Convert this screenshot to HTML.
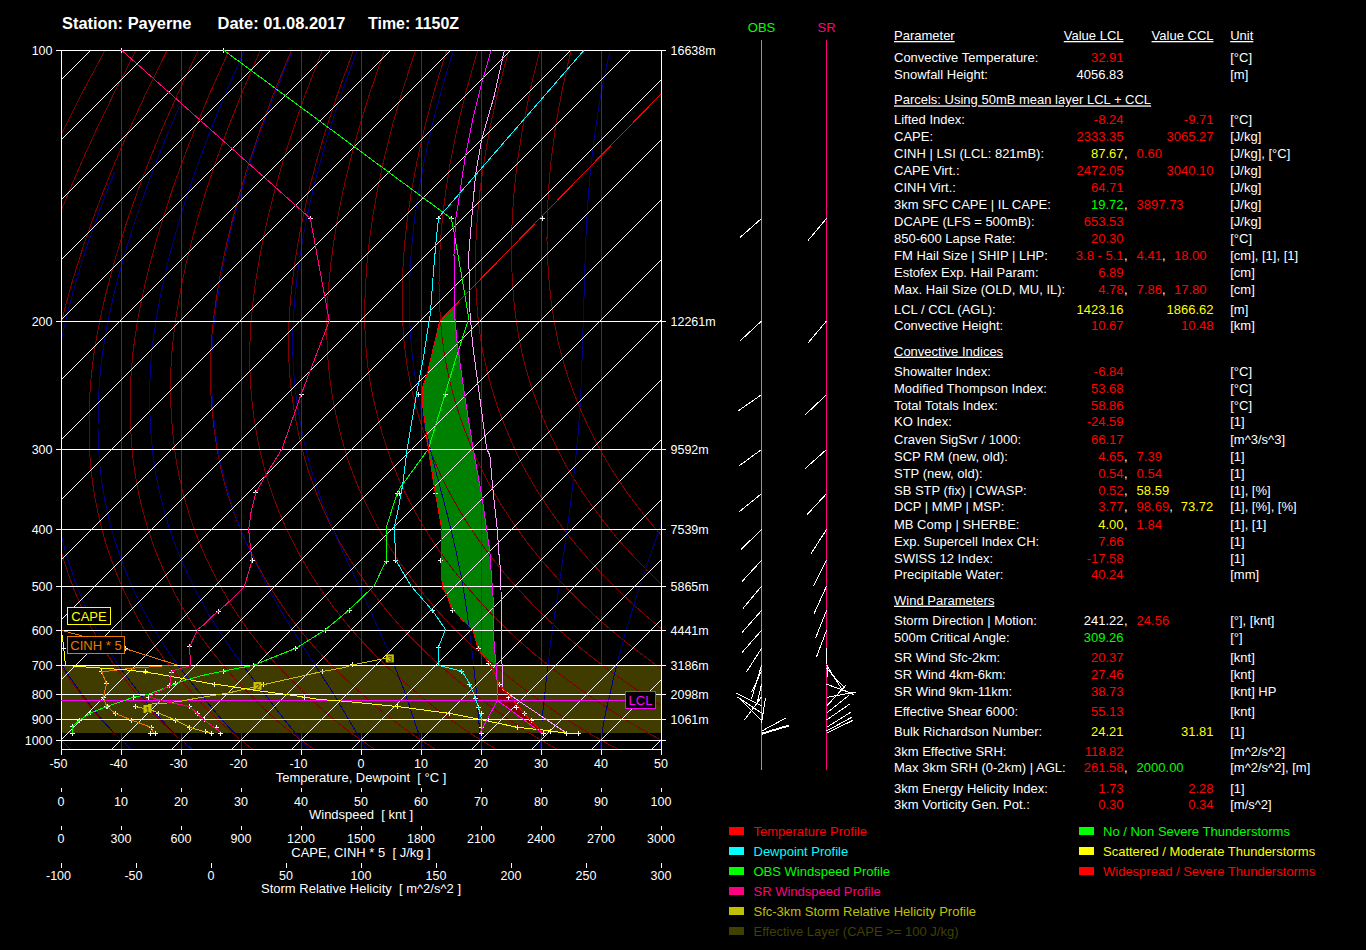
<!DOCTYPE html>
<html><head><meta charset="utf-8"><style>
html,body{margin:0;padding:0;background:#000;width:1366px;height:950px;overflow:hidden}
svg{position:absolute;left:0;top:0}
text{font-family:"Liberation Sans",sans-serif;white-space:pre}
</style></head><body>
<svg width="1366" height="950" viewBox="0 0 1366 950">
<rect x="61" y="665" width="600" height="68" fill="#403c00"/>
<path d="M454.5 306.5 L454.6 315.0 L456.8 339.2 L459.7 360.5 L465.4 400.3 L473.2 449.0 L482.2 498.0 L489.8 551.0 L491.0 570.0 L493.5 602.9 L494.1 647.1 L496.0 662.3 L496.4 670.0 L490.0 665.0 L488.4 662.3 L478.3 649.0 L472.6 629.4 L461.9 619.3 L451.8 608.6 L447.4 596.6 L442.3 587.1 L441.5 570.0 L441.2 525.8 L434.2 486.6 L428.4 449.0 L422.0 400.3 L422.0 388.9 L427.7 371.9 L439.8 321.0 L454.3 306.5Z" fill="#008000"/>
<path d="M496.5 678.0 L497.3 685.0 L497.4 700.4 L541.9 733.1 L543.0 733.1 L532.5 722.6 L522.0 710.9 L510.3 696.8 L502.0 687.5 L497.4 681.6Z" fill="#800000"/>
<path d="M104.9 50.5 L83.1 91.1 L64.6 127.6 L61.5 134.1 M61.5 740.5 L62.9 741.9 L64.8 743.8 L66.7 745.7 L68.6 747.5 L70.5 749.3 L70.8 749.5 M135.9 50.5 L115.1 91.1 L97.4 127.6 L82.4 160.2 L69.8 189.6 L61.5 210.0 M61.5 666.8 L62.3 668.1 L64.3 671.2 L66.4 674.2 L68.4 677.2 L70.4 680.1 L72.4 683.0 L74.5 685.8 L76.5 688.6 L78.5 691.3 L80.5 694.0 L82.5 696.7 L84.5 699.3 L86.5 701.9 L88.5 704.5 L90.5 707.0 L92.4 709.5 L94.4 711.9 L96.4 714.3 L98.5 716.7 L100.5 719.0 L102.5 721.3 L104.5 723.5 L106.6 725.7 L108.6 727.8 L110.7 729.9 L112.7 732.0 L114.8 734.1 L116.9 736.1 L118.9 738.1 L121.0 740.0 L123.1 741.9 L125.1 743.8 L127.2 745.7 L129.3 747.5 L131.4 749.3 L131.6 749.5 M167.0 50.5 L147.0 91.1 L130.1 127.6 L115.9 160.2 L104.0 189.6 L93.8 216.3 L85.2 240.7 L77.9 263.1 L71.6 283.9 L66.3 303.1 L61.8 321.0 L61.5 322.4 M61.5 552.6 L61.8 553.8 L63.6 559.6 L65.3 565.1 L67.1 570.6 L68.9 575.8 L70.8 581.0 L72.7 586.0 L74.5 590.9 L76.5 595.7 L78.4 600.3 L80.4 604.9 L82.4 609.3 L84.4 613.7 L86.5 617.9 L88.5 622.0 L90.6 626.1 L92.7 630.0 L94.8 633.8 L97.0 637.6 L99.1 641.3 L101.3 644.9 L103.5 648.4 L105.7 651.8 L107.9 655.2 L110.1 658.5 L112.3 661.8 L114.5 665.0 L116.7 668.1 L119.0 671.2 L121.2 674.2 L123.4 677.2 L125.7 680.1 L127.9 683.0 L130.1 685.8 L132.4 688.6 L134.6 691.3 L136.8 694.0 L139.0 696.7 L141.2 699.3 L143.4 701.9 L145.6 704.5 L147.7 707.0 L149.9 709.5 L152.1 711.9 L154.3 714.3 L156.5 716.7 L158.7 719.0 L160.9 721.3 L163.1 723.5 L165.4 725.7 L167.6 727.8 L169.8 729.9 L172.0 732.0 L174.3 734.1 L176.5 736.1 L178.8 738.1 L181.0 740.0 L183.2 741.9 L185.5 743.8 L187.7 745.7 L190.0 747.5 L192.2 749.3 L192.5 749.5 M198.1 50.5 L178.9 91.1 L162.8 127.6 L149.4 160.2 L138.2 189.6 L128.7 216.3 L120.7 240.7 L114.0 263.1 L108.4 283.9 L103.6 303.1 L99.7 321.0 L96.5 337.7 L94.0 353.1 L92.2 367.6 L90.8 381.2 L89.9 394.0 L89.3 406.1 L89.0 417.6 L89.0 428.5 L89.2 439.0 L89.5 449.0 L90.1 458.6 L90.9 467.7 L91.8 476.5 L92.9 484.8 L94.2 492.9 L95.5 500.6 L97.0 508.1 L98.5 515.3 L100.2 522.3 L101.8 529.0 L103.6 535.5 L105.4 541.8 L107.3 547.9 L109.3 553.8 L111.3 559.6 L113.4 565.1 L115.4 570.6 L117.6 575.8 L119.7 581.0 L121.9 586.0 L124.0 590.9 L126.2 595.7 L128.5 600.3 L130.7 604.9 L133.0 609.3 L135.2 613.7 L137.5 617.9 L139.9 622.0 L142.2 626.1 L144.5 630.0 L146.9 633.8 L149.3 637.6 L151.7 641.3 L154.1 644.9 L156.5 648.4 L159.0 651.8 L161.4 655.2 L163.8 658.5 L166.3 661.8 L168.7 665.0 L171.1 668.1 L173.6 671.2 L176.0 674.2 L178.5 677.2 L180.9 680.1 L183.4 683.0 L185.8 685.8 L188.3 688.6 L190.7 691.3 L193.1 694.0 L195.5 696.7 L197.9 699.3 L200.3 701.9 L202.6 704.5 L205.0 707.0 L207.4 709.5 L209.8 711.9 L212.1 714.3 L214.5 716.7 L216.9 719.0 L219.3 721.3 L221.7 723.5 L224.1 725.7 L226.5 727.8 L228.9 729.9 L231.4 732.0 L233.8 734.1 L236.2 736.1 L238.6 738.1 L241.0 740.0 L243.4 741.9 L245.8 743.8 L248.2 745.7 L250.6 747.5 L253.1 749.3 L253.3 749.5 M229.1 50.5 L210.8 91.1 L195.5 127.6 L182.9 160.2 L172.3 189.6 L163.6 216.3 L156.3 240.7 L150.2 263.1 L145.1 283.9 L140.9 303.1 L137.5 321.0 L134.9 337.7 L132.9 353.1 L131.6 367.6 L130.7 381.2 L130.2 394.0 L130.1 406.1 L130.3 417.6 L130.7 428.5 L131.3 439.0 L132.1 449.0 L133.0 458.6 L134.2 467.7 L135.5 476.5 L137.0 484.8 L138.6 492.9 L140.3 500.6 L142.1 508.1 L144.0 515.3 L146.0 522.3 L148.0 529.0 L150.1 535.5 L152.2 541.8 L154.5 547.9 L156.7 553.8 L159.1 559.6 L161.4 565.1 L163.8 570.6 L166.2 575.8 L168.6 581.0 L171.1 586.0 L173.5 590.9 L176.0 595.7 L178.5 600.3 L181.0 604.9 L183.5 609.3 L186.1 613.7 L188.6 617.9 L191.2 622.0 L193.8 626.1 L196.4 630.0 L199.0 633.8 L201.6 637.6 L204.3 641.3 L206.9 644.9 L209.6 648.4 L212.2 651.8 L214.9 655.2 L217.6 658.5 L220.2 661.8 L222.9 665.0 L225.5 668.1 L228.2 671.2 L230.9 674.2 L233.5 677.2 L236.2 680.1 L238.8 683.0 L241.5 685.8 L244.1 688.6 L246.8 691.3 L249.4 694.0 L252.0 696.7 L254.6 699.3 L257.2 701.9 L259.7 704.5 L262.3 707.0 L264.8 709.5 L267.4 711.9 L270.0 714.3 L272.6 716.7 L275.1 719.0 L277.7 721.3 L280.3 723.5 L282.9 725.7 L285.5 727.8 L288.1 729.9 L290.7 732.0 L293.2 734.1 L295.8 736.1 L298.4 738.1 L301.0 740.0 L303.6 741.9 L306.2 743.8 L308.7 745.7 L311.3 747.5 L313.9 749.3 L314.2 749.5 M260.2 50.5 L242.7 91.1 L228.2 127.6 L216.3 160.2 L206.5 189.6 L198.4 216.3 L191.8 240.7 L186.3 263.1 L181.8 283.9 L178.3 303.1 L175.4 321.0 L173.3 337.7 L171.8 353.1 L171.0 367.6 L170.6 381.2 L170.6 394.0 L170.9 406.1 L171.5 417.6 L172.4 428.5 L173.4 439.0 L174.6 449.0 L175.9 458.6 L177.5 467.7 L179.2 476.5 L181.1 484.8 L183.0 492.9 L185.1 500.6 L187.3 508.1 L189.5 515.3 L191.8 522.3 L194.2 529.0 L196.6 535.5 L199.1 541.8 L201.6 547.9 L204.2 553.8 L206.8 559.6 L209.5 565.1 L212.1 570.6 L214.8 575.8 L217.6 581.0 L220.3 586.0 L223.0 590.9 L225.8 595.7 L228.5 600.3 L231.3 604.9 L234.1 609.3 L236.9 613.7 L239.7 617.9 L242.5 622.0 L245.4 626.1 L248.2 630.0 L251.1 633.8 L254.0 637.6 L256.8 641.3 L259.7 644.9 L262.6 648.4 L265.5 651.8 L268.4 655.2 L271.3 658.5 L274.2 661.8 L277.1 665.0 L279.9 668.1 L282.8 671.2 L285.7 674.2 L288.6 677.2 L291.5 680.1 L294.3 683.0 L297.2 685.8 L300.0 688.6 L302.9 691.3 L305.7 694.0 L308.5 696.7 L311.3 699.3 L314.0 701.9 L316.8 704.5 L319.6 707.0 L322.3 709.5 L325.1 711.9 L327.8 714.3 L330.6 716.7 L333.4 719.0 L336.1 721.3 L338.9 723.5 L341.7 725.7 L344.4 727.8 L347.2 729.9 L350.0 732.0 L352.7 734.1 L355.5 736.1 L358.2 738.1 L361.0 740.0 L363.8 741.9 L366.5 743.8 L369.3 745.7 L372.0 747.5 L374.7 749.3 L375.1 749.5 M291.3 50.5 L274.6 91.1 L261.0 127.6 L249.8 160.2 L240.7 189.6 L233.3 216.3 L227.3 240.7 L222.5 263.1 L218.6 283.9 L215.6 303.1 L213.3 321.0 L211.7 337.7 L210.7 353.1 L210.4 367.6 L210.5 381.2 L210.9 394.0 L211.7 406.1 L212.8 417.6 L214.1 428.5 L215.5 439.0 L217.1 449.0 L218.9 458.6 L220.8 467.7 L222.9 476.5 L225.1 484.8 L227.5 492.9 L229.9 500.6 L232.4 508.1 L235.0 515.3 L237.7 522.3 L240.3 529.0 L243.1 535.5 L245.9 541.8 L248.7 547.9 L251.6 553.8 L254.6 559.6 L257.5 565.1 L260.5 570.6 L263.5 575.8 L266.5 581.0 L269.5 586.0 L272.5 590.9 L275.5 595.7 L278.6 600.3 L281.6 604.9 L284.7 609.3 L287.7 613.7 L290.8 617.9 L293.9 622.0 L297.0 626.1 L300.1 630.0 L303.2 633.8 L306.3 637.6 L309.4 641.3 L312.5 644.9 L315.7 648.4 L318.8 651.8 L321.9 655.2 L325.0 658.5 L328.1 661.8 L331.2 665.0 L334.3 668.1 L337.4 671.2 L340.5 674.2 L343.6 677.2 L346.7 680.1 L349.8 683.0 L352.9 685.8 L355.9 688.6 L358.9 691.3 L362.0 694.0 L365.0 696.7 L368.0 699.3 L370.9 701.9 L373.9 704.5 L376.8 707.0 L379.8 709.5 L382.7 711.9 L385.7 714.3 L388.6 716.7 L391.6 719.0 L394.5 721.3 L397.5 723.5 L400.4 725.7 L403.4 727.8 L406.3 729.9 L409.3 732.0 L412.2 734.1 L415.1 736.1 L418.1 738.1 L421.0 740.0 L423.9 741.9 L426.8 743.8 L429.8 745.7 L432.7 747.5 L435.6 749.3 L435.9 749.5 M322.3 50.5 L306.5 91.1 L293.7 127.6 L283.3 160.2 L274.9 189.6 L268.2 216.3 L262.8 240.7 L258.6 263.1 L255.3 283.9 L252.9 303.1 L251.1 321.0 L250.1 337.7 L249.7 353.1 L249.8 367.6 L250.4 381.2 L251.3 394.0 L252.5 406.1 L254.0 417.6 L255.7 428.5 L257.6 439.0 L259.6 449.0 L261.8 458.6 L264.1 467.7 L266.6 476.5 L269.2 484.8 L271.9 492.9 L274.7 500.6 L277.6 508.1 L280.5 515.3 L283.5 522.3 L286.5 529.0 L289.6 535.5 L292.7 541.8 L295.9 547.9 L299.1 553.8 L302.3 559.6 L305.6 565.1 L308.8 570.6 L312.1 575.8 L315.4 581.0 L318.7 586.0 L322.0 590.9 L325.3 595.7 L328.6 600.3 L331.9 604.9 L335.2 609.3 L338.6 613.7 L341.9 617.9 L345.2 622.0 L348.6 626.1 L351.9 630.0 L355.3 633.8 L358.6 637.6 L362.0 641.3 L365.4 644.9 L368.7 648.4 L372.1 651.8 L375.4 655.2 L378.8 658.5 L382.1 661.8 L385.4 665.0 L388.7 668.1 L392.1 671.2 L395.4 674.2 L398.7 677.2 L402.0 680.1 L405.3 683.0 L408.5 685.8 L411.8 688.6 L415.0 691.3 L418.3 694.0 L421.5 696.7 L424.6 699.3 L427.8 701.9 L431.0 704.5 L434.1 707.0 L437.2 709.5 L440.4 711.9 L443.5 714.3 L446.7 716.7 L449.8 719.0 L452.9 721.3 L456.1 723.5 L459.2 725.7 L462.3 727.8 L465.4 729.9 L468.6 732.0 L471.7 734.1 L474.8 736.1 L477.9 738.1 L481.0 740.0 L484.1 741.9 L487.2 743.8 L490.3 745.7 L493.4 747.5 L496.4 749.3 L496.8 749.5 M353.4 50.5 L338.5 91.1 L326.4 127.6 L316.8 160.2 L309.1 189.6 L303.1 216.3 L298.4 240.7 L294.7 263.1 L292.1 283.9 L290.2 303.1 L289.0 321.0 L288.5 337.7 L288.6 353.1 L289.2 367.6 L290.3 381.2 L291.7 394.0 L293.4 406.1 L295.3 417.6 L297.4 428.5 L299.7 439.0 L302.1 449.0 L304.7 458.6 L307.4 467.7 L310.3 476.5 L313.3 484.8 L316.4 492.9 L319.5 500.6 L322.7 508.1 L326.0 515.3 L329.3 522.3 L332.7 529.0 L336.1 535.5 L339.5 541.8 L343.0 547.9 L346.5 553.8 L350.1 559.6 L353.6 565.1 L357.2 570.6 L360.8 575.8 L364.3 581.0 L367.9 586.0 L371.5 590.9 L375.1 595.7 L378.6 600.3 L382.2 604.9 L385.8 609.3 L389.4 613.7 L393.0 617.9 L396.6 622.0 L400.2 626.1 L403.8 630.0 L407.4 633.8 L411.0 637.6 L414.6 641.3 L418.2 644.9 L421.8 648.4 L425.3 651.8 L428.9 655.2 L432.5 658.5 L436.1 661.8 L439.6 665.0 L443.1 668.1 L446.7 671.2 L450.2 674.2 L453.7 677.2 L457.2 680.1 L460.7 683.0 L464.2 685.8 L467.7 688.6 L471.1 691.3 L474.5 694.0 L478.0 696.7 L481.3 699.3 L484.7 701.9 L488.0 704.5 L491.4 707.0 L494.7 709.5 L498.0 711.9 L501.4 714.3 L504.7 716.7 L508.0 719.0 L511.3 721.3 L514.7 723.5 L518.0 725.7 L521.3 727.8 L524.6 729.9 L527.9 732.0 L531.2 734.1 L534.4 736.1 L537.7 738.1 L541.0 740.0 L544.3 741.9 L547.5 743.8 L550.8 745.7 L554.0 747.5 L557.3 749.3 L557.7 749.5 M384.5 50.5 L370.4 91.1 L359.1 127.6 L350.3 160.2 L343.3 189.6 L337.9 216.3 L333.9 240.7 L330.9 263.1 L328.8 283.9 L327.5 303.1 L326.9 321.0 L326.9 337.7 L327.5 353.1 L328.6 367.6 L330.1 381.2 L332.0 394.0 L334.2 406.1 L336.6 417.6 L339.1 428.5 L341.8 439.0 L344.7 449.0 L347.6 458.6 L350.7 467.7 L354.0 476.5 L357.3 484.8 L360.8 492.9 L364.3 500.6 L367.9 508.1 L371.5 515.3 L375.2 522.3 L378.8 529.0 L382.6 535.5 L386.3 541.8 L390.1 547.9 L394.0 553.8 L397.8 559.6 L401.7 565.1 L405.5 570.6 L409.4 575.8 L413.3 581.0 L417.1 586.0 L421.0 590.9 L424.8 595.7 L428.7 600.3 L432.5 604.9 L436.4 609.3 L440.2 613.7 L444.1 617.9 L447.9 622.0 L451.8 626.1 L455.6 630.0 L459.5 633.8 L463.3 637.6 L467.1 641.3 L471.0 644.9 L474.8 648.4 L478.6 651.8 L482.4 655.2 L486.2 658.5 L490.0 661.8 L493.8 665.0 L497.5 668.1 L501.3 671.2 L505.0 674.2 L508.8 677.2 L512.5 680.1 L516.2 683.0 L519.9 685.8 L523.6 688.6 L527.2 691.3 L530.8 694.0 L534.4 696.7 L538.0 699.3 L541.6 701.9 L545.1 704.5 L548.7 707.0 L552.2 709.5 L555.7 711.9 L559.2 714.3 L562.7 716.7 L566.2 719.0 L569.7 721.3 L573.2 723.5 L576.7 725.7 L580.2 727.8 L583.7 729.9 L587.2 732.0 L590.6 734.1 L594.1 736.1 L597.6 738.1 L601.0 740.0 L604.4 741.9 L607.9 743.8 L611.3 745.7 L614.7 747.5 L618.1 749.3 L618.5 749.5 M415.5 50.5 L402.3 91.1 L391.8 127.6 L383.7 160.2 L377.5 189.6 L372.8 216.3 L369.4 240.7 L367.0 263.1 L365.6 283.9 L364.8 303.1 L364.7 321.0 L365.3 337.7 L366.4 353.1 L368.0 367.6 L370.0 381.2 L372.4 394.0 L375.0 406.1 L377.8 417.6 L380.8 428.5 L383.9 439.0 L387.2 449.0 L390.5 458.6 L394.1 467.7 L397.7 476.5 L401.4 484.8 L405.2 492.9 L409.1 500.6 L413.0 508.1 L417.0 515.3 L421.0 522.3 L425.0 529.0 L429.1 535.5 L433.1 541.8 L437.3 547.9 L441.4 553.8 L445.6 559.6 L449.7 565.1 L453.9 570.6 L458.0 575.8 L462.2 581.0 L466.3 586.0 L470.5 590.9 L474.6 595.7 L478.7 600.3 L482.8 604.9 L487.0 609.3 L491.1 613.7 L495.2 617.9 L499.3 622.0 L503.4 626.1 L507.5 630.0 L511.5 633.8 L515.6 637.6 L519.7 641.3 L523.8 644.9 L527.8 648.4 L531.9 651.8 L535.9 655.2 L540.0 658.5 L544.0 661.8 L548.0 665.0 L551.9 668.1 L555.9 671.2 L559.9 674.2 L563.8 677.2 L567.8 680.1 L571.7 683.0 L575.6 685.8 L579.4 688.6 L583.3 691.3 L587.1 694.0 L590.9 696.7 L594.7 699.3 L598.5 701.9 L602.2 704.5 L605.9 707.0 L609.7 709.5 L613.4 711.9 L617.1 714.3 L620.8 716.7 L624.4 719.0 L628.1 721.3 L631.8 723.5 L635.5 725.7 L639.2 727.8 L642.8 729.9 L646.5 732.0 L650.1 734.1 L653.8 736.1 L657.4 738.1 L661.0 740.0 L661.5 740.3 M446.6 50.5 L434.2 91.1 L424.6 127.6 L417.2 160.2 L411.7 189.6 L407.7 216.3 L404.9 240.7 L403.2 263.1 L402.3 283.9 L402.1 303.1 L402.6 321.0 L403.7 337.7 L405.3 353.1 L407.4 367.6 L409.9 381.2 L412.7 394.0 L415.8 406.1 L419.1 417.6 L422.5 428.5 L426.1 439.0 L429.7 449.0 L433.5 458.6 L437.4 467.7 L441.4 476.5 L445.5 484.8 L449.7 492.9 L453.9 500.6 L458.2 508.1 L462.5 515.3 L466.8 522.3 L471.2 529.0 L475.6 535.5 L480.0 541.8 L484.4 547.9 L488.8 553.8 L493.3 559.6 L497.8 565.1 L502.2 570.6 L506.7 575.8 L511.1 581.0 L515.5 586.0 L520.0 590.9 L524.4 595.7 L528.8 600.3 L533.1 604.9 L537.5 609.3 L541.9 613.7 L546.3 617.9 L550.6 622.0 L555.0 626.1 L559.3 630.0 L563.6 633.8 L568.0 637.6 L572.3 641.3 L576.6 644.9 L580.9 648.4 L585.2 651.8 L589.4 655.2 L593.7 658.5 L597.9 661.8 L602.1 665.0 L606.3 668.1 L610.5 671.2 L614.7 674.2 L618.9 677.2 L623.0 680.1 L627.1 683.0 L631.2 685.8 L635.3 688.6 L639.4 691.3 L643.4 694.0 L647.4 696.7 L651.4 699.3 L655.4 701.9 L659.3 704.5 L661.5 705.9 M477.7 50.5 L466.1 91.1 L457.3 127.6 L450.7 160.2 L445.9 189.6 L442.6 216.3 L440.5 240.7 L439.3 263.1 L439.0 283.9 L439.5 303.1 L440.5 321.0 L442.1 337.7 L444.2 353.1 L446.8 367.6 L449.8 381.2 L453.1 394.0 L456.6 406.1 L460.3 417.6 L464.2 428.5 L468.2 439.0 L472.2 449.0 L476.4 458.6 L480.7 467.7 L485.1 476.5 L489.6 484.8 L494.1 492.9 L498.7 500.6 L503.3 508.1 L508.0 515.3 L512.7 522.3 L517.4 529.0 L522.1 535.5 L526.8 541.8 L531.5 547.9 L536.3 553.8 L541.0 559.6 L545.8 565.1 L550.6 570.6 L555.3 575.8 L560.0 581.0 L564.8 586.0 L569.4 590.9 L574.1 595.7 L578.8 600.3 L583.4 604.9 L588.1 609.3 L592.7 613.7 L597.3 617.9 L602.0 622.0 L606.6 626.1 L611.1 630.0 L615.7 633.8 L620.3 637.6 L624.9 641.3 L629.4 644.9 L633.9 648.4 L638.5 651.8 L643.0 655.2 L647.4 658.5 L651.9 661.8 L656.3 665.0 L660.8 668.1 L661.5 668.7 M508.7 50.5 L498.0 91.1 L490.0 127.6 L484.2 160.2 L480.1 189.6 L477.4 216.3 L476.0 240.7 L475.5 263.1 L475.8 283.9 L476.8 303.1 L478.3 321.0 L480.5 337.7 L483.1 353.1 L486.3 367.6 L489.7 381.2 L493.5 394.0 L497.4 406.1 L501.6 417.6 L505.9 428.5 L510.3 439.0 L514.7 449.0 L519.3 458.6 L524.0 467.7 L528.8 476.5 L533.6 484.8 L538.5 492.9 L543.5 500.6 L548.5 508.1 L553.5 515.3 L558.5 522.3 L563.5 529.0 L568.5 535.5 L573.6 541.8 L578.7 547.9 L583.7 553.8 L588.8 559.6 L593.9 565.1 L598.9 570.6 L604.0 575.8 L609.0 581.0 L614.0 586.0 L618.9 590.9 L623.9 595.7 L628.8 600.3 L633.8 604.9 L638.7 609.3 L643.6 613.7 L648.4 617.9 L653.3 622.0 L658.2 626.1 L661.5 628.8 M539.8 50.5 L529.9 91.1 L522.7 127.6 L517.6 160.2 L514.3 189.6 L512.3 216.3 L511.5 240.7 L511.6 263.1 L512.5 283.9 L514.1 303.1 L516.2 321.0 L518.9 337.7 L522.0 353.1 L525.7 367.6 L529.6 381.2 L533.8 394.0 L538.3 406.1 L542.9 417.6 L547.6 428.5 L552.4 439.0 L557.3 449.0 L562.2 458.6 L567.3 467.7 L572.5 476.5 L577.7 484.8 L583.0 492.9 L588.3 500.6 L593.6 508.1 L599.0 515.3 L604.3 522.3 L609.7 529.0 L615.0 535.5 L620.4 541.8 L625.8 547.9 L631.2 553.8 L636.5 559.6 L641.9 565.1 L647.3 570.6 L652.6 575.8 L657.9 581.0 L661.5 584.4 M570.9 50.5 L561.9 91.1 L555.4 127.6 L551.1 160.2 L548.5 189.6 L547.2 216.3 L547.0 240.7 L547.8 263.1 L549.3 283.9 L551.4 303.1 L554.1 321.0 L557.3 337.7 L561.0 353.1 L565.1 367.6 L569.5 381.2 L574.2 394.0 L579.1 406.1 L584.1 417.6 L589.3 428.5 L594.5 439.0 L599.8 449.0 L605.2 458.6 L610.6 467.7 L616.2 476.5 L621.8 484.8 L627.4 492.9 L633.1 500.6 L638.8 508.1 L644.5 515.3 L650.2 522.3 L655.9 529.0 L661.5 535.5" stroke="#800000" fill="none" stroke-width="1" shape-rendering="crispEdges"/>
<path d="M131.1 749.5 L121.0 740.0 L120.0 739.0 L119.0 738.1 L118.1 737.1 L117.1 736.1 L116.1 735.1 L115.1 734.1 L114.1 733.0 L113.1 732.0 L112.1 731.0 L111.2 729.9 L110.2 728.9 L109.2 727.8 L108.2 726.8 L107.2 725.7 L106.2 724.6 L105.3 723.5 L104.3 722.4 L103.3 721.3 L102.3 720.1 L101.3 719.0 L100.3 717.9 L99.4 716.7 L98.4 715.5 L97.4 714.3 L96.4 713.1 L95.5 711.9 L94.5 710.7 L93.5 709.5 L92.6 708.3 L91.6 707.0 L90.6 705.7 L89.7 704.5 L88.7 703.2 L87.7 701.9 L86.8 700.6 L85.8 699.3 L84.8 698.0 L83.8 696.7 L82.9 695.3 L81.9 694.0 L80.9 692.7 L79.9 691.3 L78.9 689.9 L77.9 688.6 L76.9 687.2 L75.9 685.8 L74.9 684.4 L73.9 683.0 L72.9 681.5 L71.9 680.1 L70.9 678.7 L69.9 677.2 L68.9 675.7 L67.9 674.2 L66.9 672.7 L65.9 671.2 L65.0 669.7 L64.0 668.1 L63.0 666.6 L62.0 665.0 L61.5 664.2 M191.1 749.5 L181.0 740.0 L180.0 739.0 L179.0 738.1 L178.0 737.1 L177.0 736.1 L176.0 735.1 L175.0 734.1 L174.0 733.0 L173.0 732.0 L171.9 731.0 L170.9 729.9 L169.9 728.9 L168.9 727.8 L167.9 726.8 L166.9 725.7 L165.8 724.6 L164.8 723.5 L163.8 722.4 L162.8 721.3 L161.7 720.1 L160.7 719.0 L159.7 717.9 L158.7 716.7 L157.6 715.5 L156.6 714.3 L155.6 713.1 L154.6 711.9 L153.5 710.7 L152.5 709.5 L151.5 708.3 L150.5 707.0 L149.4 705.7 L148.4 704.5 L147.4 703.2 L146.4 701.9 L145.3 700.6 L144.3 699.3 L143.2 698.0 L142.2 696.7 L141.1 695.3 L140.1 694.0 L139.0 692.7 L138.0 691.3 L136.9 689.9 L135.8 688.6 L134.8 687.2 L133.7 685.8 L132.6 684.4 L131.5 683.0 L130.4 681.5 L129.4 680.1 L128.3 678.7 L127.2 677.2 L126.1 675.7 L125.0 674.2 L123.9 672.7 L122.8 671.2 L121.7 669.7 L120.7 668.1 L119.6 666.6 L118.5 665.0 L117.4 663.4 L116.3 661.8 L115.2 660.2 L114.2 658.5 L113.1 656.9 L112.0 655.2 L110.9 653.5 L109.8 651.8 L108.7 650.1 L107.6 648.4 L106.6 646.7 L105.5 644.9 L104.4 643.1 L103.3 641.3 L102.3 639.5 L101.2 637.6 L100.1 635.7 L99.1 633.8 L98.0 631.9 L97.0 630.0 L95.9 628.0 L94.9 626.1 L93.8 624.1 L92.8 622.0 L91.8 620.0 L90.7 617.9 L89.7 615.8 L88.7 613.7 L87.7 611.5 L86.7 609.3 L85.7 607.1 L84.7 604.9 L83.7 602.6 L82.7 600.3 L81.8 598.0 L80.8 595.7 L79.8 593.3 L78.9 590.9 L77.9 588.5 L77.0 586.0 L76.0 583.5 L75.1 581.0 L74.2 578.4 L73.2 575.8 L72.3 573.2 L71.4 570.6 L70.5 567.9 L69.6 565.1 L68.7 562.4 L67.8 559.6 L67.0 556.7 L66.1 553.8 L65.3 550.9 L64.5 547.9 L63.7 544.9 L62.9 541.8 L62.1 538.7 L61.5 536.2 M61.5 340.0 L62.0 337.7 L63.7 329.5 L65.7 321.0 L67.8 312.2 L70.1 303.1 L72.7 293.6 L75.4 283.9 L78.4 273.7 L81.6 263.1 L85.1 252.1 L88.9 240.7 L93.1 228.7 L97.5 216.3 L102.4 203.2 L107.6 189.6 L113.3 175.2 L114.5 172.3 M250.5 749.5 L241.0 740.0 L240.1 739.0 L239.1 738.1 L238.1 737.1 L237.2 736.1 L236.2 735.1 L235.3 734.1 L234.3 733.0 L233.3 732.0 L232.3 731.0 L231.4 729.9 L230.4 728.9 L229.4 727.8 L228.4 726.8 L227.4 725.7 L226.4 724.6 L225.4 723.5 L224.4 722.4 L223.4 721.3 L222.4 720.1 L221.4 719.0 L220.4 717.9 L219.3 716.7 L218.3 715.5 L217.3 714.3 L216.3 713.1 L215.3 711.9 L214.2 710.7 L213.2 709.5 L212.2 708.3 L211.2 707.0 L210.1 705.7 L209.1 704.5 L208.0 703.2 L207.0 701.9 L205.9 700.6 L204.9 699.3 L203.8 698.0 L202.7 696.7 L201.7 695.3 L200.6 694.0 L199.5 692.7 L198.4 691.3 L197.3 689.9 L196.2 688.6 L195.1 687.2 L193.9 685.8 L192.8 684.4 L191.7 683.0 L190.6 681.5 L189.4 680.1 L188.3 678.7 L187.1 677.2 L186.0 675.7 L184.8 674.2 L183.7 672.7 L182.5 671.2 L181.4 669.7 L180.2 668.1 L179.1 666.6 L177.9 665.0 L176.8 663.4 L175.6 661.8 L174.4 660.2 L173.3 658.5 L172.1 656.9 L170.9 655.2 L169.7 653.5 L168.6 651.8 L167.4 650.1 L166.2 648.4 L165.0 646.7 L163.9 644.9 L162.7 643.1 L161.5 641.3 L160.3 639.5 L159.2 637.6 L158.0 635.7 L156.8 633.8 L155.7 631.9 L154.5 630.0 L153.3 628.0 L152.2 626.1 L151.0 624.1 L149.9 622.0 L148.7 620.0 L147.6 617.9 L146.4 615.8 L145.3 613.7 L144.2 611.5 L143.0 609.3 L141.9 607.1 L140.8 604.9 L139.6 602.6 L138.5 600.3 L137.4 598.0 L136.3 595.7 L135.2 593.3 L134.1 590.9 L133.0 588.5 L131.9 586.0 L130.8 583.5 L129.7 581.0 L128.6 578.4 L127.6 575.8 L126.5 573.2 L125.4 570.6 L124.4 567.9 L123.3 565.1 L122.3 562.4 L121.2 559.6 L120.2 556.7 L119.2 553.8 L118.2 550.9 L117.2 547.9 L116.2 544.9 L115.2 541.8 L114.3 538.7 L113.4 535.5 L112.4 532.3 L111.6 529.0 L110.7 525.7 L109.8 522.3 L109.0 518.8 L108.2 515.3 L107.4 511.7 L106.6 508.1 L105.8 504.4 L105.0 500.6 L104.3 496.8 L103.6 492.9 L103.0 488.9 L102.3 484.8 L101.7 480.7 L101.2 476.5 L100.6 472.1 L100.1 467.7 L99.7 463.2 L99.3 458.6 L99.0 453.9 L98.7 449.0 L98.5 444.0 L98.3 439.0 L98.1 433.8 L98.0 428.5 L98.0 423.1 L98.0 417.6 L98.0 411.9 L98.2 406.1 L98.4 400.1 L98.7 394.0 L99.1 387.7 L99.5 381.2 L100.1 374.5 L100.8 367.6 L101.6 360.5 L102.6 353.1 L103.7 345.5 L105.0 337.7 L106.4 329.5 L108.1 321.0 L109.9 312.2 L111.9 303.1 L114.1 293.6 L116.6 283.9 L119.2 273.7 L122.1 263.1 L125.3 252.1 L128.7 240.7 L132.5 228.7 L136.6 216.3 L141.0 203.2 L145.9 189.6 L151.2 175.2 L157.0 160.2 L163.4 144.3 L170.3 127.6 L177.9 109.9 L179.5 106.2 M309.0 749.5 L301.0 740.0 L300.2 739.0 L299.4 738.1 L298.6 737.1 L297.7 736.1 L296.9 735.1 L296.1 734.1 L295.2 733.0 L294.4 732.0 L293.6 731.0 L292.7 729.9 L291.8 728.9 L291.0 727.8 L290.1 726.8 L289.2 725.7 L288.4 724.6 L287.5 723.5 L286.6 722.4 L285.7 721.3 L284.8 720.1 L283.9 719.0 L283.0 717.9 L282.1 716.7 L281.2 715.5 L280.3 714.3 L279.3 713.1 L278.4 711.9 L277.5 710.7 L276.5 709.5 L275.6 708.3 L274.7 707.0 L273.7 705.7 L272.8 704.5 L271.8 703.2 L270.8 701.9 L269.8 700.6 L268.8 699.3 L267.8 698.0 L266.8 696.7 L265.8 695.3 L264.8 694.0 L263.8 692.7 L262.7 691.3 L261.7 689.9 L260.6 688.6 L259.5 687.2 L258.5 685.8 L257.4 684.4 L256.3 683.0 L255.2 681.5 L254.1 680.1 L252.9 678.7 L251.8 677.2 L250.7 675.7 L249.6 674.2 L248.4 672.7 L247.3 671.2 L246.1 669.7 L245.0 668.1 L243.8 666.6 L242.6 665.0 L241.5 663.4 L240.3 661.8 L239.1 660.2 L237.9 658.5 L236.7 656.9 L235.5 655.2 L234.3 653.5 L233.1 651.8 L231.9 650.1 L230.7 648.4 L229.5 646.7 L228.2 644.9 L227.0 643.1 L225.8 641.3 L224.5 639.5 L223.3 637.6 L222.1 635.7 L220.8 633.8 L219.6 631.9 L218.3 630.0 L217.1 628.0 L215.8 626.1 L214.6 624.1 L213.4 622.0 L212.1 620.0 L210.9 617.9 L209.6 615.8 L208.4 613.7 L207.1 611.5 L205.9 609.3 L204.6 607.1 L203.4 604.9 L202.2 602.6 L200.9 600.3 L199.7 598.0 L198.4 595.7 L197.2 593.3 L196.0 590.9 L194.7 588.5 L193.5 586.0 L192.2 583.5 L191.0 581.0 L189.8 578.4 L188.5 575.8 L187.3 573.2 L186.1 570.6 L184.9 567.9 L183.7 565.1 L182.4 562.4 L181.2 559.6 L180.0 556.7 L178.8 553.8 L177.7 550.9 L176.5 547.9 L175.3 544.9 L174.2 541.8 L173.0 538.7 L171.9 535.5 L170.8 532.3 L169.7 529.0 L168.7 525.7 L167.6 522.3 L166.6 518.8 L165.5 515.3 L164.5 511.7 L163.5 508.1 L162.5 504.4 L161.6 500.6 L160.6 496.8 L159.7 492.9 L158.8 488.9 L157.9 484.8 L157.1 480.7 L156.3 476.5 L155.5 472.1 L154.8 467.7 L154.1 463.2 L153.5 458.6 L152.9 453.9 L152.4 449.0 L151.9 444.0 L151.4 439.0 L151.0 433.8 L150.7 428.5 L150.3 423.1 L150.1 417.6 L149.9 411.9 L149.7 406.1 L149.6 400.1 L149.6 394.0 L149.7 387.7 L149.9 381.2 L150.2 374.5 L150.6 367.6 L151.1 360.5 L151.7 353.1 L152.5 345.5 L153.5 337.7 L154.6 329.5 L155.9 321.0 L157.4 312.2 L159.1 303.1 L160.9 293.6 L163.0 283.9 L165.3 273.7 L167.8 263.1 L170.6 252.1 L173.6 240.7 L177.0 228.7 L180.6 216.3 L184.7 203.2 L189.1 189.6 L194.0 175.2 L199.3 160.2 L205.2 144.3 L211.7 127.6 L218.8 109.9 L226.6 91.1 L235.2 71.2 L244.5 50.5 M366.8 749.5 L361.0 740.0 L360.4 739.0 L359.8 738.1 L359.2 737.1 L358.6 736.1 L358.0 735.1 L357.4 734.1 L356.8 733.0 L356.2 732.0 L355.5 731.0 L354.9 729.9 L354.3 728.9 L353.6 727.8 L353.0 726.8 L352.3 725.7 L351.7 724.6 L351.0 723.5 L350.4 722.4 L349.7 721.3 L349.0 720.1 L348.3 719.0 L347.7 717.9 L347.0 716.7 L346.3 715.5 L345.6 714.3 L344.9 713.1 L344.2 711.9 L343.5 710.7 L342.8 709.5 L342.1 708.3 L341.3 707.0 L340.6 705.7 L339.9 704.5 L339.1 703.2 L338.4 701.9 L337.6 700.6 L336.8 699.3 L336.0 698.0 L335.2 696.7 L334.4 695.3 L333.6 694.0 L332.8 692.7 L331.9 691.3 L331.1 689.9 L330.2 688.6 L329.3 687.2 L328.5 685.8 L327.6 684.4 L326.7 683.0 L325.7 681.5 L324.8 680.1 L323.9 678.7 L322.9 677.2 L322.0 675.7 L321.0 674.2 L320.0 672.7 L319.1 671.2 L318.1 669.7 L317.1 668.1 L316.1 666.6 L315.0 665.0 L314.0 663.4 L313.0 661.8 L311.9 660.2 L310.9 658.5 L309.8 656.9 L308.7 655.2 L307.6 653.5 L306.5 651.8 L305.4 650.1 L304.3 648.4 L303.2 646.7 L302.0 644.9 L300.9 643.1 L299.7 641.3 L298.6 639.5 L297.4 637.6 L296.2 635.7 L295.0 633.8 L293.8 631.9 L292.6 630.0 L291.4 628.0 L290.2 626.1 L289.0 624.1 L287.7 622.0 L286.5 620.0 L285.3 617.9 L284.0 615.8 L282.8 613.7 L281.5 611.5 L280.2 609.3 L279.0 607.1 L277.7 604.9 L276.4 602.6 L275.1 600.3 L273.8 598.0 L272.5 595.7 L271.2 593.3 L269.9 590.9 L268.6 588.5 L267.2 586.0 L265.9 583.5 L264.6 581.0 L263.2 578.4 L261.9 575.8 L260.5 573.2 L259.2 570.6 L257.8 567.9 L256.5 565.1 L255.1 562.4 L253.8 559.6 L252.4 556.7 L251.1 553.8 L249.7 550.9 L248.4 547.9 L247.0 544.9 L245.7 541.8 L244.4 538.7 L243.1 535.5 L241.8 532.3 L240.5 529.0 L239.2 525.7 L237.9 522.3 L236.6 518.8 L235.4 515.3 L234.1 511.7 L232.9 508.1 L231.7 504.4 L230.5 500.6 L229.3 496.8 L228.1 492.9 L227.0 488.9 L225.8 484.8 L224.7 480.7 L223.7 476.5 L222.6 472.1 L221.6 467.7 L220.7 463.2 L219.7 458.6 L218.8 453.9 L218.0 449.0 L217.2 444.0 L216.4 439.0 L215.7 433.8 L215.0 428.5 L214.4 423.1 L213.8 417.6 L213.3 411.9 L212.8 406.1 L212.4 400.1 L212.0 394.0 L211.7 387.7 L211.6 381.2 L211.5 374.5 L211.5 367.6 L211.6 360.5 L211.9 353.1 L212.3 345.5 L212.8 337.7 L213.5 329.5 L214.4 321.0 L215.5 312.2 L216.7 303.1 L218.2 293.6 L219.8 283.9 L221.6 273.7 L223.7 263.1 L226.0 252.1 L228.5 240.7 L231.4 228.7 L234.6 216.3 L238.1 203.2 L242.0 189.6 L246.3 175.2 L251.1 160.2 L256.4 144.3 L262.2 127.6 L268.7 109.9 L275.9 91.1 L283.9 71.2 L292.6 50.5 M424.5 749.5 L421.0 740.0 L420.7 739.0 L420.3 738.1 L420.0 737.1 L419.6 736.1 L419.3 735.1 L418.9 734.1 L418.5 733.0 L418.2 732.0 L417.8 731.0 L417.5 729.9 L417.1 728.9 L416.7 727.8 L416.4 726.8 L416.0 725.7 L415.6 724.6 L415.2 723.5 L414.9 722.4 L414.5 721.3 L414.1 720.1 L413.7 719.0 L413.3 717.9 L412.9 716.7 L412.6 715.5 L412.2 714.3 L411.8 713.1 L411.4 711.9 L411.0 710.7 L410.6 709.5 L410.2 708.3 L409.8 707.0 L409.4 705.7 L409.0 704.5 L408.5 703.2 L408.1 701.9 L407.7 700.6 L407.2 699.3 L406.8 698.0 L406.3 696.7 L405.9 695.3 L405.4 694.0 L404.9 692.7 L404.4 691.3 L403.9 689.9 L403.4 688.6 L402.9 687.2 L402.4 685.8 L401.8 684.4 L401.3 683.0 L400.7 681.5 L400.2 680.1 L399.6 678.7 L399.0 677.2 L398.4 675.7 L397.8 674.2 L397.2 672.7 L396.6 671.2 L396.0 669.7 L395.4 668.1 L394.8 666.6 L394.1 665.0 L393.5 663.4 L392.8 661.8 L392.1 660.2 L391.4 658.5 L390.7 656.9 L390.0 655.2 L389.3 653.5 L388.6 651.8 L387.8 650.1 L387.1 648.4 L386.3 646.7 L385.6 644.9 L384.8 643.1 L384.0 641.3 L383.2 639.5 L382.4 637.6 L381.5 635.7 L380.7 633.8 L379.8 631.9 L379.0 630.0 L378.1 628.0 L377.2 626.1 L376.3 624.1 L375.4 622.0 L374.5 620.0 L373.5 617.9 L372.6 615.8 L371.6 613.7 L370.6 611.5 L369.6 609.3 L368.6 607.1 L367.6 604.9 L366.6 602.6 L365.5 600.3 L364.5 598.0 L363.4 595.7 L362.3 593.3 L361.2 590.9 L360.0 588.5 L358.9 586.0 L357.7 583.5 L356.5 581.0 L355.3 578.4 L354.1 575.8 L352.9 573.2 L351.6 570.6 L350.4 567.9 L349.1 565.1 L347.8 562.4 L346.5 559.6 L345.2 556.7 L343.9 553.8 L342.5 550.9 L341.2 547.9 L339.8 544.9 L338.4 541.8 L337.1 538.7 L335.7 535.5 L334.3 532.3 L332.9 529.0 L331.6 525.7 L330.2 522.3 L328.8 518.8 L327.4 515.3 L326.0 511.7 L324.6 508.1 L323.1 504.4 L321.7 500.6 L320.3 496.8 L318.9 492.9 L317.6 488.9 L316.2 484.8 L314.8 480.7 L313.5 476.5 L312.1 472.1 L310.8 467.7 L309.5 463.2 L308.3 458.6 L307.1 453.9 L305.9 449.0 L304.8 444.0 L303.6 439.0 L302.5 433.8 L301.4 428.5 L300.4 423.1 L299.4 417.6 L298.4 411.9 L297.5 406.1 L296.7 400.1 L295.9 394.0 L295.1 387.7 L294.5 381.2 L293.9 374.5 L293.5 367.6 L293.1 360.5 L292.8 353.1 L292.7 345.5 L292.7 337.7 L292.9 329.5 L293.3 321.0 L293.8 312.2 L294.4 303.1 L295.3 293.6 L296.3 283.9 L297.5 273.7 L298.9 263.1 L300.6 252.1 L302.5 240.7 L304.7 228.7 L307.2 216.3 L310.0 203.2 L313.2 189.6 L316.8 175.2 L320.8 160.2 L325.3 144.3 L330.4 127.6 L336.1 109.9 L342.4 91.1 L349.5 71.2 L357.3 50.5 M482.4 749.5 L481.0 740.0 L480.9 739.0 L480.7 738.1 L480.6 737.1 L480.5 736.1 L480.4 735.1 L480.2 734.1 L480.1 733.0 L480.0 732.0 L479.9 731.0 L479.7 729.9 L479.6 728.9 L479.5 727.8 L479.4 726.8 L479.3 725.7 L479.2 724.6 L479.0 723.5 L478.9 722.4 L478.8 721.3 L478.7 720.1 L478.6 719.0 L478.5 717.9 L478.4 716.7 L478.3 715.5 L478.2 714.3 L478.1 713.1 L478.0 711.9 L477.9 710.7 L477.8 709.5 L477.7 708.3 L477.6 707.0 L477.5 705.7 L477.4 704.5 L477.3 703.2 L477.2 701.9 L477.1 700.6 L477.0 699.3 L476.9 698.0 L476.8 696.7 L476.7 695.3 L476.6 694.0 L476.4 692.7 L476.3 691.3 L476.2 689.9 L476.1 688.6 L475.9 687.2 L475.8 685.8 L475.6 684.4 L475.5 683.0 L475.3 681.5 L475.2 680.1 L475.0 678.7 L474.9 677.2 L474.7 675.7 L474.6 674.2 L474.4 672.7 L474.2 671.2 L474.1 669.7 L473.9 668.1 L473.7 666.6 L473.6 665.0 L473.4 663.4 L473.2 661.8 L473.0 660.2 L472.8 658.5 L472.7 656.9 L472.5 655.2 L472.3 653.5 L472.1 651.8 L471.9 650.1 L471.6 648.4 L471.4 646.7 L471.2 644.9 L471.0 643.1 L470.8 641.3 L470.5 639.5 L470.3 637.6 L470.1 635.7 L469.8 633.8 L469.6 631.9 L469.3 630.0 L469.1 628.0 L468.8 626.1 L468.6 624.1 L468.3 622.0 L468.0 620.0 L467.7 617.9 L467.5 615.8 L467.2 613.7 L466.9 611.5 L466.6 609.3 L466.2 607.1 L465.9 604.9 L465.6 602.6 L465.2 600.3 L464.9 598.0 L464.5 595.7 L464.1 593.3 L463.7 590.9 L463.3 588.5 L462.9 586.0 L462.5 583.5 L462.0 581.0 L461.5 578.4 L461.1 575.8 L460.6 573.2 L460.0 570.6 L459.5 567.9 L458.9 565.1 L458.4 562.4 L457.8 559.6 L457.2 556.7 L456.5 553.8 L455.9 550.9 L455.2 547.9 L454.5 544.9 L453.8 541.8 L453.1 538.7 L452.4 535.5 L451.6 532.3 L450.8 529.0 L450.0 525.7 L449.2 522.3 L448.3 518.8 L447.5 515.3 L446.5 511.7 L445.6 508.1 L444.6 504.4 L443.7 500.6 L442.6 496.8 L441.6 492.9 L440.5 488.9 L439.5 484.8 L438.4 480.7 L437.2 476.5 L436.1 472.1 L434.9 467.7 L433.8 463.2 L432.6 458.6 L431.4 453.9 L430.3 449.0 L429.1 444.0 L427.9 439.0 L426.7 433.8 L425.4 428.5 L424.2 423.1 L423.0 417.6 L421.7 411.9 L420.5 406.1 L419.3 400.1 L418.1 394.0 L417.0 387.7 L415.9 381.2 L414.8 374.5 L413.8 367.6 L412.9 360.5 L412.0 353.1 L411.3 345.5 L410.7 337.7 L410.2 329.5 L409.8 321.0 L409.6 312.2 L409.4 303.1 L409.5 293.6 L409.7 283.9 L410.0 273.7 L410.6 263.1 L411.3 252.1 L412.3 240.7 L413.5 228.7 L415.0 216.3 L416.9 203.2 L419.0 189.6 L421.5 175.2 L424.4 160.2 L427.8 144.3 L431.7 127.6 L436.1 109.9 L441.2 91.1 L447.0 71.2 L453.5 50.5 M540.9 749.5 L541.0 740.0 L541.0 739.0 L541.1 738.1 L541.1 737.1 L541.1 736.1 L541.2 735.1 L541.2 734.1 L541.3 733.0 L541.3 732.0 L541.4 731.0 L541.4 729.9 L541.5 728.9 L541.5 727.8 L541.6 726.8 L541.7 725.7 L541.8 724.6 L541.8 723.5 L541.9 722.4 L542.0 721.3 L542.1 720.1 L542.2 719.0 L542.3 717.9 L542.4 716.7 L542.5 715.5 L542.6 714.3 L542.7 713.1 L542.8 711.9 L542.9 710.7 L543.1 709.5 L543.2 708.3 L543.3 707.0 L543.5 705.7 L543.6 704.5 L543.7 703.2 L543.9 701.9 L544.0 700.6 L544.2 699.3 L544.3 698.0 L544.5 696.7 L544.6 695.3 L544.8 694.0 L544.9 692.7 L545.1 691.3 L545.2 689.9 L545.3 688.6 L545.5 687.2 L545.6 685.8 L545.8 684.4 L545.9 683.0 L546.1 681.5 L546.3 680.1 L546.4 678.7 L546.6 677.2 L546.7 675.7 L546.9 674.2 L547.1 672.7 L547.2 671.2 L547.4 669.7 L547.6 668.1 L547.8 666.6 L548.0 665.0 L548.2 663.4 L548.4 661.8 L548.6 660.2 L548.8 658.5 L549.0 656.9 L549.2 655.2 L549.4 653.5 L549.6 651.8 L549.8 650.1 L550.0 648.4 L550.2 646.7 L550.5 644.9 L550.7 643.1 L550.9 641.3 L551.2 639.5 L551.4 637.6 L551.7 635.7 L551.9 633.8 L552.2 631.9 L552.5 630.0 L552.7 628.0 L553.0 626.1 L553.3 624.1 L553.6 622.0 L553.9 620.0 L554.2 617.9 L554.5 615.8 L554.8 613.7 L555.2 611.5 L555.5 609.3 L555.8 607.1 L556.1 604.9 L556.5 602.6 L556.8 600.3 L557.2 598.0 L557.5 595.7 L557.9 593.3 L558.3 590.9 L558.6 588.5 L559.0 586.0 L559.4 583.5 L559.7 581.0 L560.1 578.4 L560.5 575.8 L560.9 573.2 L561.3 570.6 L561.6 567.9 L562.0 565.1 L562.4 562.4 L562.8 559.6 L563.2 556.7 L563.6 553.8 L564.1 550.9 L564.5 547.9 L564.9 544.9 L565.3 541.8 L565.8 538.7 L566.2 535.5 L566.7 532.3 L567.1 529.0 L567.6 525.7 L568.1 522.3 L568.5 518.8 L569.0 515.3 L569.5 511.7 L569.9 508.1 L570.4 504.4 L570.9 500.6 L571.3 496.8 L571.8 492.9 L572.3 488.9 L572.7 484.8 L573.2 480.7 L573.7 476.5 L574.2 472.1 L574.7 467.7 L575.2 463.2 L575.6 458.6 L576.1 453.9 L576.6 449.0 L577.1 444.0 L577.6 439.0 L578.1 433.8 L578.5 428.5 L578.9 423.1 L579.3 417.6 L579.7 411.9 L580.1 406.1 L580.4 400.1 L580.7 394.0 L581.0 387.7 L581.3 381.2 L581.5 374.5 L581.8 367.6 L582.0 360.5 L582.3 353.1 L582.5 345.5 L582.7 337.7 L583.0 329.5 L583.2 321.0 L583.5 312.2 L583.8 303.1 L584.1 293.6 L584.3 283.9 L584.6 273.7 L585.0 263.1 L585.3 252.1 L585.8 240.7 L586.3 228.7 L587.0 216.3 L587.8 203.2 L588.9 189.6 L590.1 175.2 L591.6 160.2 L593.5 144.3 L595.7 127.6 L598.4 109.9 L601.6 91.1 L605.5 71.2 L609.9 50.5 M599.9 749.5 L601.0 740.0 L601.1 739.0 L601.3 738.1 L601.4 737.1 L601.6 736.1 L601.7 735.1 L601.9 734.1 L602.0 733.0 L602.2 732.0 L602.3 731.0 L602.5 729.9 L602.7 728.9 L602.9 727.8 L603.0 726.8 L603.2 725.7 L603.4 724.6 L603.6 723.5 L603.8 722.4 L604.0 721.3 L604.2 720.1 L604.4 719.0 L604.7 717.9 L604.9 716.7 L605.1 715.5 L605.4 714.3 L605.6 713.1 L605.9 711.9 L606.1 710.7 L606.4 709.5 L606.7 708.3 L606.9 707.0 L607.2 705.7 L607.5 704.5 L607.8 703.2 L608.1 701.9 L608.4 700.6 L608.7 699.3 L609.0 698.0 L609.3 696.7 L609.6 695.3 L609.9 694.0 L610.2 692.7 L610.5 691.3 L610.8 689.9 L611.1 688.6 L611.4 687.2 L611.8 685.8 L612.1 684.4 L612.4 683.0 L612.7 681.5 L613.1 680.1 L613.4 678.7 L613.8 677.2 L614.1 675.7 L614.5 674.2 L614.8 672.7 L615.2 671.2 L615.6 669.7 L616.0 668.1 L616.4 666.6 L616.8 665.0 L617.2 663.4 L617.6 661.8 L618.0 660.2 L618.4 658.5 L618.8 656.9 L619.3 655.2 L619.7 653.5 L620.2 651.8 L620.6 650.1 L621.1 648.4 L621.6 646.7 L622.1 644.9 L622.5 643.1 L623.0 641.3 L623.6 639.5 L624.1 637.6 L624.6 635.7 L625.1 633.8 L625.7 631.9 L626.3 630.0 L626.8 628.0 L627.4 626.1 L628.0 624.1 L628.6 622.0 L629.2 620.0 L629.9 617.9 L630.5 615.8 L631.2 613.7 L631.8 611.5 L632.5 609.3 L633.2 607.1 L633.9 604.9 L634.6 602.6 L635.4 600.3 L636.1 598.0 L636.9 595.7 L637.6 593.3 L638.4 590.9 L639.2 588.5 L640.0 586.0 L640.8 583.5 L641.7 581.0 L642.5 578.4 L643.4 575.8 L644.2 573.2 L645.1 570.6 L646.0 567.9 L647.0 565.1 L647.9 562.4 L648.9 559.6 L649.8 556.7 L650.8 553.8 L651.8 550.9 L652.9 547.9 L653.9 544.9 L655.0 541.8 L656.1 538.7 L657.3 535.5 L658.4 532.3 L659.6 529.0 L660.9 525.7 L661.5 523.9 M659.3 749.5 L661.0 740.0 L661.2 739.0 L661.4 738.1 L661.5 737.5" stroke="#000080" fill="none" stroke-width="1" shape-rendering="crispEdges"/>
<path d="M121.5 50 V750 M181.5 50 V750 M241.5 50 V750 M301.5 50 V750 M361.5 50 V750 M421.5 50 V750 M481.5 50 V750 M541.5 50 V750 M601.5 50 V750" stroke="#006000" fill="none" stroke-width="1" shape-rendering="crispEdges"/>
<path d="M61.5 79.5 L90.5 50.5 M61.5 139.5 L150.5 50.5 M61.5 199.5 L210.5 50.5 M61.5 259.5 L270.5 50.5 M61.5 319.5 L330.5 50.5 M61.5 379.5 L390.5 50.5 M61.5 439.5 L450.5 50.5 M61.5 499.5 L510.5 50.5 M61.5 559.5 L570.5 50.5 M61.5 619.5 L630.5 50.5 M61.5 679.5 L661.5 79.5 M61.5 739.5 L661.5 139.5 M111.5 749.5 L661.5 199.5 M171.5 749.5 L661.5 259.5 M231.5 749.5 L661.5 319.5 M291.5 749.5 L661.5 379.5 M351.5 749.5 L661.5 439.5 M411.5 749.5 L661.5 499.5 M471.5 749.5 L661.5 559.5 M531.5 749.5 L661.5 619.5 M591.5 749.5 L661.5 679.5 M651.5 749.5 L661.5 739.5" stroke="#ffffff" fill="none" stroke-width="1" shape-rendering="crispEdges"/>
<path d="M56 50.5 H666 M56 321.5 H666 M56 449.5 H666 M56 529.5 H666 M56 586.5 H666 M56 630.5 H666 M56 665.5 H666 M56 694.5 H666 M56 719.5 H666 M56 740.5 H666" stroke="#ffffff" fill="none" stroke-width="1" shape-rendering="crispEdges"/>
<path d="M61.5 50 V750 M661.5 50 V750 M61 749.5 H662" stroke="#ffffff" fill="none" stroke-width="1" shape-rendering="crispEdges"/>
<path d="M61 700.5 H625" stroke="#ff00ff" stroke-width="1" shape-rendering="crispEdges"/>
<path d="M540 218.5 h5 M542.5 216 v5 M416 394.5 h5 M418.5 392 v5 M433 493.5 h5 M435.5 491 v5 M438 560.5 h5 M440.5 558 v5 M450 610.5 h5 M452.5 608 v5 M476 648.5 h5 M478.5 646 v5 M486 663.5 h5 M488.5 661 v5 M497 684.5 h5 M499.5 682 v5 M506 697.5 h5 M508.5 695 v5 M514 707.5 h5 M516.5 705 v5 M522 713.5 h5 M524.5 711 v5 M529 720.5 h5 M531.5 718 v5 M541 733.5 h5 M543.5 731 v5" stroke="#fff" stroke-width="1" fill="none" shape-rendering="crispEdges"/>
<path d="M436 218.5 h5 M438.5 216 v5 M397 493.5 h5 M399.5 491 v5 M393 560.5 h5 M395.5 558 v5 M430 610.5 h5 M432.5 608 v5 M436 647.5 h5 M438.5 645 v5 M459 671.5 h5 M461.5 669 v5 M467 684.5 h5 M469.5 682 v5 M473 698.5 h5 M475.5 696 v5 M476 707.5 h5 M478.5 705 v5 M479 713.5 h5 M481.5 711 v5 M479 727.5 h5 M481.5 725 v5 M479 733.5 h5 M481.5 731 v5" stroke="#fff" stroke-width="1" fill="none" shape-rendering="crispEdges"/>
<path d="M449 218.5 h5 M451.5 216 v5 M443 394.5 h5 M445.5 392 v5 M395 493.5 h5 M397.5 491 v5 M384 561.5 h5 M386.5 559 v5 M347 610.5 h5 M349.5 608 v5 M323 630.5 h5 M325.5 628 v5 M293 648.5 h5 M295.5 646 v5 M251 665.5 h5 M253.5 663 v5 M221 671.5 h5 M223.5 669 v5 M173 683.5 h5 M175.5 681 v5 M131 697.5 h5 M133.5 695 v5 M104 706.5 h5 M106.5 704 v5 M88 712.5 h5 M90.5 710 v5 M77 720.5 h5 M79.5 718 v5 M70 726.5 h5 M72.5 724 v5 M70 733.5 h5 M72.5 731 v5" stroke="#fff" stroke-width="1" fill="none" shape-rendering="crispEdges"/>
<path d="M308 218.5 h5 M310.5 216 v5 M299 394.5 h5 M301.5 392 v5 M253 492.5 h5 M255.5 490 v5 M250 560.5 h5 M252.5 558 v5 M216 611.5 h5 M218.5 609 v5 M187 646.5 h5 M189.5 644 v5 M169 672.5 h5 M171.5 670 v5 M167 685.5 h5 M169.5 683 v5 M146 697.5 h5 M148.5 695 v5 M187 706.5 h5 M189.5 704 v5 M195 713.5 h5 M197.5 711 v5 M202 719.5 h5 M204.5 717 v5 M214 727.5 h5 M216.5 725 v5 M218 733.5 h5 M220.5 731 v5" stroke="#fff" stroke-width="1" fill="none" shape-rendering="crispEdges"/>
<path d="M61 648.5 h5 M63.5 646 v5 M143 671.5 h5 M145.5 669 v5 M212 684.5 h5 M214.5 682 v5 M302 697.5 h5 M304.5 695 v5 M395 706.5 h5 M397.5 704 v5 M447 713.5 h5 M449.5 711 v5 M486 719.5 h5 M488.5 717 v5 M515 727.5 h5 M517.5 725 v5 M548 731.5 h5 M550.5 729 v5 M564 733.5 h5 M566.5 731 v5 M576 733.5 h5 M578.5 731 v5" stroke="#fff" stroke-width="1" fill="none" shape-rendering="crispEdges"/>
<path d="M123 648.5 h5 M125.5 646 v5 M99 671.5 h5 M101.5 669 v5 M104 683.5 h5 M106.5 681 v5 M101 697.5 h5 M103.5 695 v5 M105 706.5 h5 M107.5 704 v5 M113 713.5 h5 M115.5 711 v5 M129 720.5 h5 M131.5 718 v5 M149 727.5 h5 M151.5 725 v5 M148 733.5 h5 M150.5 731 v5 M153 733.5 h5 M155.5 731 v5" stroke="#fff" stroke-width="1" fill="none" shape-rendering="crispEdges"/>
<path d="M133 706.5 h5 M135.5 704 v5 M156 713.5 h5 M158.5 711 v5 M173 720.5 h5 M175.5 718 v5 M187 727.5 h5 M189.5 725 v5 M203 731.5 h5 M205.5 729 v5 M209 733.5 h5 M211.5 731 v5 M261 684.5 h5 M263.5 682 v5 M320 671.5 h5 M322.5 669 v5 M350 664.5 h5 M352.5 662 v5" stroke="#fff" stroke-width="1" fill="none" shape-rendering="crispEdges"/>
<path d="M564 733.5 h5 M566.5 731 v5 M119 50.5 h5 M121.5 48 v5 M221 50.5 h5 M223.5 48 v5" stroke="#fff" stroke-width="1" fill="none" shape-rendering="crispEdges"/>
<path d="M210.5 733.3 L189.5 727.4 L175.5 720.0 L158.7 713.2 L151.0 710.0 L147.5 709.0 L135.3 706.6" stroke="#c8c000" stroke-width="1" fill="none" shape-rendering="crispEdges" />
<path d="M148.2 704.2 L165.0 703.4 L168.7 702.6 L180.8 701.3 L190.8 699.3 L230.0 692.6 L257.0 686.3 L263.4 684.7 L321.8 671.6 L345.0 667.4 L352.7 664.8 L385.2 658.4 L389.8 658.4" stroke="#c8c000" stroke-width="1" fill="none" shape-rendering="crispEdges" />
<path d="M62.0 630.5 L80.2 635.4 L125.7 648.8 L176.5 664.8 L159.5 666.2 L130.0 668.4 L101.8 671.9 L106.5 683.7 L103.4 697.2 L106.5 705.8 L114.4 712.9 L131.3 720.0 L151.3 727.4 L153.4 733.0" stroke="#e87800" stroke-width="1" fill="none" shape-rendering="crispEdges" />
<path d="M62.3 635.0 L65.5 665.5 L100.2 668.0 L130.0 670.2 L156.8 673.8 L183.7 678.7 L210.5 683.6 L230.0 686.3 L256.6 690.5 L288.2 694.7 L319.7 699.5 L345.0 701.3 L397.4 706.5 L449.5 713.4 L478.6 719.1 L517.3 727.3 L550.0 730.8 L565.3 733.1 L578.2 733.1" stroke="#ffff00" stroke-width="1" fill="none" shape-rendering="crispEdges" />
<path d="M223.5 50.0 L451.2 218.4 L453.0 226.6 L462.5 280.9 L468.2 315.0 L468.0 321.0 L456.1 357.7 L428.4 449.0 L400.0 488.0 L397.0 494.0 L386.0 528.0 L386.0 561.0 L374.0 586.0 L349.0 610.0 L325.0 630.0 L309.2 640.0 L295.5 648.4 L253.4 665.3 L230.0 669.8 L201.6 675.6 L180.1 681.8 L164.0 688.5 L147.9 694.4 L133.4 697.2 L127.1 699.5 L120.7 701.9 L106.5 706.6 L90.7 712.9 L79.7 720.0 L72.6 726.4 L72.6 733.4" stroke="#00ff00" stroke-width="1" fill="none" shape-rendering="crispEdges" />
<path d="M121.4 50.0 L310.3 218.4 L329.3 321.0 L301.1 394.4 L282.0 449.0 L267.2 472.7 L255.8 492.6 L251.0 512.5 L248.6 529.6 L251.0 552.3 L252.0 560.8 L244.4 586.4 L231.2 599.7 L218.8 611.0 L212.6 615.8 L204.0 624.5 L197.8 629.4 L189.7 646.4 L190.4 665.7 L172.9 670.7 L171.1 672.0 L170.7 685.0 L149.2 697.0 L158.7 699.7 L168.7 702.4 L182.9 705.0 L189.7 706.6 L203.3 719.4 L220.3 731.9" stroke="#ff0080" stroke-width="1" fill="none" shape-rendering="crispEdges" />
<path d="M584.2 50.0 L441.7 214.0 L438.5 218.4 L436.6 235.4 L433.5 270.8 L430.3 315.0 L429.1 321.0 L423.4 357.7 L417.7 387.5 L407.1 449.0 L402.6 485.4 L398.0 510.0 L394.4 527.0 L395.7 560.0 L411.0 586.0 L432.0 610.0 L445.5 629.4 L438.5 647.1 L438.5 665.4 L461.9 671.1 L469.9 684.0 L475.1 698.0 L478.6 707.4 L481.6 719.1 L481.6 733.1" stroke="#00ffff" stroke-width="1" fill="none" shape-rendering="crispEdges" />
<path d="M504.4 50.0 L494.3 95.5 L481.7 139.3 L475.8 173.0 L472.7 205.0 L472.0 215.2 L468.8 253.0 L469.5 306.0 L472.5 343.4 L478.2 386.1 L486.7 449.0 L489.8 455.0 L493.0 490.4 L497.4 530.8 L499.3 558.6 L500.5 570.0 L501.0 590.3 L502.3 685.0 L502.6 689.8 L506.7 692.2 L512.6 696.8 L566.5 733.1" stroke="#ffa0ff" stroke-width="1" fill="none" shape-rendering="crispEdges" />
<path d="M661.0 94.0 L439.8 321.0 L427.7 371.9 L422.0 388.9 L422.0 400.3 L428.4 449.0 L434.2 486.6 L441.2 525.8 L441.5 570.0 L442.3 587.1 L447.4 596.6 L451.8 608.6 L461.9 619.3 L472.6 629.4 L478.3 649.0 L488.4 662.3 L495.0 673.4 L497.4 681.6 L502.0 687.5 L510.3 696.8 L522.0 710.9 L532.5 722.6 L543.0 733.1" stroke="#ff0000" stroke-width="1" fill="none" shape-rendering="crispEdges" />
<path d="M491.3 50.0 L482.5 80.4 L472.4 120.8 L464.8 159.5 L458.0 205.0 L455.6 220.0 L454.0 254.0 L454.6 315.0 L456.8 339.2 L459.7 360.5 L465.4 400.3 L473.2 449.0 L482.2 498.0 L489.8 551.0 L491.0 570.0 L493.5 602.9 L494.1 647.1 L496.0 662.3 L497.3 685.0 L497.4 700.4 L541.9 733.1" stroke="#ff00ff" stroke-width="1" fill="none" shape-rendering="crispEdges" />
<path d="M497.4 700.4 L479.8 733.1" stroke="#ff00ff" stroke-width="1" fill="none" shape-rendering="crispEdges" />
<rect x="143.5" y="705.0" width="8" height="8" fill="#c8c000"/>
<text x="147.5" y="712.5" font-size="9" fill="#403c00" text-anchor="middle">1</text>
<rect x="253.5" y="682.0" width="8" height="8" fill="#c8c000"/>
<text x="257.5" y="689.5" font-size="9" fill="#403c00" text-anchor="middle">2</text>
<rect x="385.8" y="654.4" width="8" height="8" fill="#c8c000"/>
<text x="389.8" y="661.9" font-size="9" fill="#403c00" text-anchor="middle">3</text>
<rect x="67.5" y="607.5" width="43" height="17" fill="#000" stroke="#ffff00" stroke-width="1"/>
<text x="89" y="621" font-size="13" fill="#ffff00" text-anchor="middle">CAPE</text>
<rect x="67.5" y="636.5" width="57" height="17" fill="#000" stroke="#e87800" stroke-width="1"/>
<text x="96" y="650" font-size="13" fill="#e87800" text-anchor="middle">CINH * 5</text>
<rect x="625.5" y="691.5" width="30" height="17" fill="#000" stroke="#ff00ff" stroke-width="1"/>
<text x="640.5" y="705" font-size="13" fill="#ff00ff" text-anchor="middle">LCL</text>
<path d="M61.5 750 V755 M61.5 788 V792 M61.5 826 V830 M121.5 750 V755 M121.5 788 V792 M121.5 826 V830 M181.5 750 V755 M181.5 788 V792 M181.5 826 V830 M241.5 750 V755 M241.5 788 V792 M241.5 826 V830 M301.5 750 V755 M301.5 788 V792 M301.5 826 V830 M361.5 750 V755 M361.5 788 V792 M361.5 826 V830 M421.5 750 V755 M421.5 788 V792 M421.5 826 V830 M481.5 750 V755 M481.5 788 V792 M481.5 826 V830 M541.5 750 V755 M541.5 788 V792 M541.5 826 V830 M601.5 750 V755 M601.5 788 V792 M601.5 826 V830 M661.5 750 V755 M661.5 788 V792 M661.5 826 V830 M61.5 863 V868 M136.5 863 V868 M211.5 863 V868 M286.5 863 V868 M361.5 863 V868 M436.5 863 V868 M511.5 863 V868 M586.5 863 V868 M661.5 863 V868" stroke="#fff" stroke-width="1" shape-rendering="crispEdges"/>
<path d="M761.5 40 V770" stroke="#00ff00" stroke-width="1" shape-rendering="crispEdges"/>
<path d="M826.5 40 V770" stroke="#ff0080" stroke-width="1" shape-rendering="crispEdges"/>
<path d="M761.5 218.5 L740.0 237.5 M761.5 321.0 L740.0 341.0 M761.5 394.7 L738.0 411.0 M761.5 449.5 L738.5 466.3 M761.5 493.7 L739.4 511.6 M761.5 529.5 L741.0 549.5 M761.5 560.4 L742.0 581.5 M761.5 586.3 L743.0 608.4 M761.5 610.5 L742.0 632.6 M761.5 630.4 L742.2 652.3 M761.5 648.3 L746.4 672.2 M761.5 665.5 L751.5 698.8 M761.5 671.0 L751.5 692.4 M761.5 684.4 L757.4 702.1 M761.5 697.0 L744.3 720.2 M736.3 693.3 L761.5 705.9 M737.6 697.1 L761.5 713.1 M740.5 699.6 L761.5 720.2 M761.5 723.2 L765.4 698.3 M761.5 731.2 L786.4 717.7 M761.5 733.3 L789.4 724.9 M761.5 734.3 L789.4 725.9 M826.5 218.5 L808.0 240.5 M826.5 321.0 L808.0 343.0 M826.5 394.7 L805.3 414.7 M826.5 449.5 L805.3 468.4 M826.5 493.7 L807.0 514.7 M826.5 529.5 L811.0 553.7 M826.5 560.4 L813.3 586.3 M826.5 586.3 L814.0 613.7 M826.5 610.5 L815.6 638.0 M826.5 630.4 L816.3 657.4 M826.5 648.0 L826.5 664.0 M827.5 665.0 L827.5 677.4 M826.5 665.0 L842.1 689.5 M842.1 689.5 L853.7 694.7 M826.5 668.0 L834.7 677.4 M834.7 677.4 L845.0 688.0 M826.5 684.2 L852.6 693.7 M826.5 697.4 L855.8 692.1 M826.5 706.3 L845.8 685.3 M826.5 713.2 L848.9 695.3 M826.5 720.0 L849.5 704.2 M826.5 727.4 L851.0 712.1 M826.5 731.0 L851.6 717.4 M826.5 733.2 L852.6 720.5" stroke="#fff" stroke-width="1" fill="none" shape-rendering="crispEdges"/>
<rect x="729" y="827" width="15" height="8" fill="#ff0000"/>
<rect x="729" y="847" width="15" height="8" fill="#00ffff"/>
<rect x="729" y="867" width="15" height="8" fill="#00ff00"/>
<rect x="729" y="887" width="15" height="8" fill="#ff0080"/>
<rect x="729" y="907" width="15" height="8" fill="#c0c000"/>
<rect x="729" y="927" width="15" height="8" fill="#404000"/>
<rect x="1079" y="827" width="15" height="8" fill="#00ff00"/>
<rect x="1079" y="847" width="15" height="8" fill="#ffff00"/>
<rect x="1079" y="867" width="15" height="8" fill="#ff0000"/>
<text x="62.0" y="29.0" font-size="16" fill="#fff" text-anchor="start" font-weight="bold" textLength="129.5" lengthAdjust="spacingAndGlyphs">Station: Payerne</text>
<text x="217.5" y="29.0" font-size="16" fill="#fff" text-anchor="start" font-weight="bold" textLength="128" lengthAdjust="spacingAndGlyphs">Date: 01.08.2017</text>
<text x="368.0" y="29.0" font-size="16" fill="#fff" text-anchor="start" font-weight="bold" textLength="91" lengthAdjust="spacingAndGlyphs">Time: 1150Z</text>
<text x="52.5" y="55.0" font-size="12.5" fill="#fff" text-anchor="end" font-weight="normal" >100</text>
<text x="52.5" y="326.0" font-size="12.5" fill="#fff" text-anchor="end" font-weight="normal" >200</text>
<text x="52.5" y="454.0" font-size="12.5" fill="#fff" text-anchor="end" font-weight="normal" >300</text>
<text x="52.5" y="534.0" font-size="12.5" fill="#fff" text-anchor="end" font-weight="normal" >400</text>
<text x="52.5" y="591.0" font-size="12.5" fill="#fff" text-anchor="end" font-weight="normal" >500</text>
<text x="52.5" y="635.0" font-size="12.5" fill="#fff" text-anchor="end" font-weight="normal" >600</text>
<text x="52.5" y="670.0" font-size="12.5" fill="#fff" text-anchor="end" font-weight="normal" >700</text>
<text x="52.5" y="699.0" font-size="12.5" fill="#fff" text-anchor="end" font-weight="normal" >800</text>
<text x="52.5" y="724.0" font-size="12.5" fill="#fff" text-anchor="end" font-weight="normal" >900</text>
<text x="52.5" y="745.0" font-size="12.5" fill="#fff" text-anchor="end" font-weight="normal" >1000</text>
<text x="670.5" y="55.0" font-size="12.5" fill="#fff" text-anchor="start" font-weight="normal" >16638m</text>
<text x="670.5" y="326.0" font-size="12.5" fill="#fff" text-anchor="start" font-weight="normal" >12261m</text>
<text x="670.5" y="454.0" font-size="12.5" fill="#fff" text-anchor="start" font-weight="normal" >9592m</text>
<text x="670.5" y="534.0" font-size="12.5" fill="#fff" text-anchor="start" font-weight="normal" >7539m</text>
<text x="670.5" y="591.0" font-size="12.5" fill="#fff" text-anchor="start" font-weight="normal" >5865m</text>
<text x="670.5" y="635.0" font-size="12.5" fill="#fff" text-anchor="start" font-weight="normal" >4441m</text>
<text x="670.5" y="670.0" font-size="12.5" fill="#fff" text-anchor="start" font-weight="normal" >3186m</text>
<text x="670.5" y="699.0" font-size="12.5" fill="#fff" text-anchor="start" font-weight="normal" >2098m</text>
<text x="670.5" y="724.0" font-size="12.5" fill="#fff" text-anchor="start" font-weight="normal" >1061m</text>
<text x="58.5" y="768.0" font-size="12.5" fill="#fff" text-anchor="middle" font-weight="normal" >-50</text>
<text x="61.0" y="805.5" font-size="12.5" fill="#fff" text-anchor="middle" font-weight="normal" >0</text>
<text x="61.0" y="842.5" font-size="12.5" fill="#fff" text-anchor="middle" font-weight="normal" >0</text>
<text x="118.5" y="768.0" font-size="12.5" fill="#fff" text-anchor="middle" font-weight="normal" >-40</text>
<text x="121.0" y="805.5" font-size="12.5" fill="#fff" text-anchor="middle" font-weight="normal" >10</text>
<text x="121.0" y="842.5" font-size="12.5" fill="#fff" text-anchor="middle" font-weight="normal" >300</text>
<text x="178.5" y="768.0" font-size="12.5" fill="#fff" text-anchor="middle" font-weight="normal" >-30</text>
<text x="181.0" y="805.5" font-size="12.5" fill="#fff" text-anchor="middle" font-weight="normal" >20</text>
<text x="181.0" y="842.5" font-size="12.5" fill="#fff" text-anchor="middle" font-weight="normal" >600</text>
<text x="238.5" y="768.0" font-size="12.5" fill="#fff" text-anchor="middle" font-weight="normal" >-20</text>
<text x="241.0" y="805.5" font-size="12.5" fill="#fff" text-anchor="middle" font-weight="normal" >30</text>
<text x="241.0" y="842.5" font-size="12.5" fill="#fff" text-anchor="middle" font-weight="normal" >900</text>
<text x="298.5" y="768.0" font-size="12.5" fill="#fff" text-anchor="middle" font-weight="normal" >-10</text>
<text x="301.0" y="805.5" font-size="12.5" fill="#fff" text-anchor="middle" font-weight="normal" >40</text>
<text x="301.0" y="842.5" font-size="12.5" fill="#fff" text-anchor="middle" font-weight="normal" >1200</text>
<text x="361.0" y="768.0" font-size="12.5" fill="#fff" text-anchor="middle" font-weight="normal" >0</text>
<text x="361.0" y="805.5" font-size="12.5" fill="#fff" text-anchor="middle" font-weight="normal" >50</text>
<text x="361.0" y="842.5" font-size="12.5" fill="#fff" text-anchor="middle" font-weight="normal" >1500</text>
<text x="421.0" y="768.0" font-size="12.5" fill="#fff" text-anchor="middle" font-weight="normal" >10</text>
<text x="421.0" y="805.5" font-size="12.5" fill="#fff" text-anchor="middle" font-weight="normal" >60</text>
<text x="421.0" y="842.5" font-size="12.5" fill="#fff" text-anchor="middle" font-weight="normal" >1800</text>
<text x="481.0" y="768.0" font-size="12.5" fill="#fff" text-anchor="middle" font-weight="normal" >20</text>
<text x="481.0" y="805.5" font-size="12.5" fill="#fff" text-anchor="middle" font-weight="normal" >70</text>
<text x="481.0" y="842.5" font-size="12.5" fill="#fff" text-anchor="middle" font-weight="normal" >2100</text>
<text x="541.0" y="768.0" font-size="12.5" fill="#fff" text-anchor="middle" font-weight="normal" >30</text>
<text x="541.0" y="805.5" font-size="12.5" fill="#fff" text-anchor="middle" font-weight="normal" >80</text>
<text x="541.0" y="842.5" font-size="12.5" fill="#fff" text-anchor="middle" font-weight="normal" >2400</text>
<text x="601.0" y="768.0" font-size="12.5" fill="#fff" text-anchor="middle" font-weight="normal" >40</text>
<text x="601.0" y="805.5" font-size="12.5" fill="#fff" text-anchor="middle" font-weight="normal" >90</text>
<text x="601.0" y="842.5" font-size="12.5" fill="#fff" text-anchor="middle" font-weight="normal" >2700</text>
<text x="661.0" y="768.0" font-size="12.5" fill="#fff" text-anchor="middle" font-weight="normal" >50</text>
<text x="661.0" y="805.5" font-size="12.5" fill="#fff" text-anchor="middle" font-weight="normal" >100</text>
<text x="661.0" y="842.5" font-size="12.5" fill="#fff" text-anchor="middle" font-weight="normal" >3000</text>
<text x="58.5" y="880.0" font-size="12.5" fill="#fff" text-anchor="middle" font-weight="normal" >-100</text>
<text x="133.5" y="880.0" font-size="12.5" fill="#fff" text-anchor="middle" font-weight="normal" >-50</text>
<text x="211.0" y="880.0" font-size="12.5" fill="#fff" text-anchor="middle" font-weight="normal" >0</text>
<text x="286.0" y="880.0" font-size="12.5" fill="#fff" text-anchor="middle" font-weight="normal" >50</text>
<text x="361.0" y="880.0" font-size="12.5" fill="#fff" text-anchor="middle" font-weight="normal" >100</text>
<text x="436.0" y="880.0" font-size="12.5" fill="#fff" text-anchor="middle" font-weight="normal" >150</text>
<text x="511.0" y="880.0" font-size="12.5" fill="#fff" text-anchor="middle" font-weight="normal" >200</text>
<text x="586.0" y="880.0" font-size="12.5" fill="#fff" text-anchor="middle" font-weight="normal" >250</text>
<text x="661.0" y="880.0" font-size="12.5" fill="#fff" text-anchor="middle" font-weight="normal" >300</text>
<text x="361.0" y="781.5" font-size="13" fill="#fff" text-anchor="middle" font-weight="normal" xml:space="preserve">Temperature, Dewpoint  [ °C ]</text>
<text x="361.0" y="819.0" font-size="13" fill="#fff" text-anchor="middle" font-weight="normal" xml:space="preserve">Windspeed  [ knt ]</text>
<text x="361.0" y="856.5" font-size="13" fill="#fff" text-anchor="middle" font-weight="normal" xml:space="preserve">CAPE, CINH * 5  [ J/kg ]</text>
<text x="361.0" y="893.0" font-size="13" fill="#fff" text-anchor="middle" font-weight="normal" xml:space="preserve">Storm Relative Helicity  [ m^2/s^2 ]</text>
<text x="761.5" y="32.0" font-size="13" fill="#00ff00" text-anchor="middle" font-weight="normal" >OBS</text>
<text x="826.5" y="32.0" font-size="13" fill="#ff0080" text-anchor="middle" font-weight="normal" >SR</text>
<text x="894.0" y="61.6" font-size="13" fill="#fff" text-anchor="start" font-weight="normal" >Convective Temperature:</text>
<text x="1123.5" y="61.6" font-size="13" fill="#ff0000" text-anchor="end" font-weight="normal" >32.91</text>
<text x="1230.2" y="61.6" font-size="13" fill="#fff" text-anchor="start" font-weight="normal" >[°C]</text>
<text x="894.0" y="78.6" font-size="13" fill="#fff" text-anchor="start" font-weight="normal" >Snowfall Height:</text>
<text x="1123.5" y="78.6" font-size="13" fill="#ffffff" text-anchor="end" font-weight="normal" >4056.83</text>
<text x="1230.2" y="78.6" font-size="13" fill="#fff" text-anchor="start" font-weight="normal" >[m]</text>
<text x="894.0" y="123.9" font-size="13" fill="#fff" text-anchor="start" font-weight="normal" >Lifted Index:</text>
<text x="1123.5" y="123.9" font-size="13" fill="#ff0000" text-anchor="end" font-weight="normal" >-8.24</text>
<text x="1213.5" y="123.9" font-size="13" fill="#ff0000" text-anchor="end" font-weight="normal" >-9.71</text>
<text x="1230.2" y="123.9" font-size="13" fill="#fff" text-anchor="start" font-weight="normal" >[°C]</text>
<text x="894.0" y="140.8" font-size="13" fill="#fff" text-anchor="start" font-weight="normal" >CAPE:</text>
<text x="1123.5" y="140.8" font-size="13" fill="#ff0000" text-anchor="end" font-weight="normal" >2333.35</text>
<text x="1213.5" y="140.8" font-size="13" fill="#ff0000" text-anchor="end" font-weight="normal" >3065.27</text>
<text x="1230.2" y="140.8" font-size="13" fill="#fff" text-anchor="start" font-weight="normal" >[J/kg]</text>
<text x="894.0" y="157.6" font-size="13" fill="#fff" text-anchor="start" font-weight="normal" >CINH | LSI (LCL: 821mB):</text>
<text x="1123.5" y="157.6" font-size="13" fill="#ffff00" text-anchor="end" font-weight="normal" >87.67</text>
<text x="1124.0" y="157.6" font-size="13" fill="#fff" text-anchor="start" font-weight="normal" >,</text>
<text x="1136.6" y="157.6" font-size="13" fill="#ff0000" text-anchor="start" font-weight="normal" >0.60</text>
<text x="1230.2" y="157.6" font-size="13" fill="#fff" text-anchor="start" font-weight="normal" >[J/kg], [°C]</text>
<text x="894.0" y="175.1" font-size="13" fill="#fff" text-anchor="start" font-weight="normal" >CAPE Virt.:</text>
<text x="1123.5" y="175.1" font-size="13" fill="#ff0000" text-anchor="end" font-weight="normal" >2472.05</text>
<text x="1213.5" y="175.1" font-size="13" fill="#ff0000" text-anchor="end" font-weight="normal" >3040.10</text>
<text x="1230.2" y="175.1" font-size="13" fill="#fff" text-anchor="start" font-weight="normal" >[J/kg]</text>
<text x="894.0" y="191.9" font-size="13" fill="#fff" text-anchor="start" font-weight="normal" >CINH Virt.:</text>
<text x="1123.5" y="191.9" font-size="13" fill="#ff0000" text-anchor="end" font-weight="normal" >64.71</text>
<text x="1230.2" y="191.9" font-size="13" fill="#fff" text-anchor="start" font-weight="normal" >[J/kg]</text>
<text x="894.0" y="208.8" font-size="13" fill="#fff" text-anchor="start" font-weight="normal" >3km SFC CAPE | IL CAPE:</text>
<text x="1123.5" y="208.8" font-size="13" fill="#00ff00" text-anchor="end" font-weight="normal" >19.72</text>
<text x="1124.0" y="208.8" font-size="13" fill="#fff" text-anchor="start" font-weight="normal" >,</text>
<text x="1136.6" y="208.8" font-size="13" fill="#ff0000" text-anchor="start" font-weight="normal" >3897.73</text>
<text x="1230.2" y="208.8" font-size="13" fill="#fff" text-anchor="start" font-weight="normal" >[J/kg]</text>
<text x="894.0" y="225.6" font-size="13" fill="#fff" text-anchor="start" font-weight="normal" >DCAPE (LFS = 500mB):</text>
<text x="1123.5" y="225.6" font-size="13" fill="#ff0000" text-anchor="end" font-weight="normal" >653.53</text>
<text x="1230.2" y="225.6" font-size="13" fill="#fff" text-anchor="start" font-weight="normal" >[J/kg]</text>
<text x="894.0" y="242.8" font-size="13" fill="#fff" text-anchor="start" font-weight="normal" >850-600 Lapse Rate:</text>
<text x="1123.5" y="242.8" font-size="13" fill="#ff0000" text-anchor="end" font-weight="normal" >20.30</text>
<text x="1230.2" y="242.8" font-size="13" fill="#fff" text-anchor="start" font-weight="normal" >[°C]</text>
<text x="894.0" y="259.6" font-size="13" fill="#fff" text-anchor="start" font-weight="normal" >FM Hail Size | SHIP | LHP:</text>
<text x="1123.5" y="259.6" font-size="13" fill="#ff0000" text-anchor="end" font-weight="normal" >3.8 - 5.1</text>
<text x="1124.0" y="259.6" font-size="13" fill="#fff" text-anchor="start" font-weight="normal" >,</text>
<text x="1136.6" y="259.6" font-size="13" fill="#ff0000" text-anchor="start" font-weight="normal" >4.41<tspan fill="#fff">,</tspan></text>
<text x="1174.0" y="259.6" font-size="13" fill="#ff0000" text-anchor="start" font-weight="normal" >18.00</text>
<text x="1230.2" y="259.6" font-size="13" fill="#fff" text-anchor="start" font-weight="normal" >[cm], [1], [1]</text>
<text x="894.0" y="276.5" font-size="13" fill="#fff" text-anchor="start" font-weight="normal" >Estofex Exp. Hail Param:</text>
<text x="1123.5" y="276.5" font-size="13" fill="#ff0000" text-anchor="end" font-weight="normal" >6.89</text>
<text x="1230.2" y="276.5" font-size="13" fill="#fff" text-anchor="start" font-weight="normal" >[cm]</text>
<text x="894.0" y="294.0" font-size="13" fill="#fff" text-anchor="start" font-weight="normal" >Max. Hail Size (OLD, MU, IL):</text>
<text x="1123.5" y="294.0" font-size="13" fill="#ff0000" text-anchor="end" font-weight="normal" >4.78</text>
<text x="1124.0" y="294.0" font-size="13" fill="#fff" text-anchor="start" font-weight="normal" >,</text>
<text x="1136.6" y="294.0" font-size="13" fill="#ff0000" text-anchor="start" font-weight="normal" >7.86<tspan fill="#fff">,</tspan></text>
<text x="1174.0" y="294.0" font-size="13" fill="#ff0000" text-anchor="start" font-weight="normal" >17.80</text>
<text x="1230.2" y="294.0" font-size="13" fill="#fff" text-anchor="start" font-weight="normal" >[cm]</text>
<text x="894.0" y="313.5" font-size="13" fill="#fff" text-anchor="start" font-weight="normal" >LCL / CCL (AGL):</text>
<text x="1123.5" y="313.5" font-size="13" fill="#ffff00" text-anchor="end" font-weight="normal" >1423.16</text>
<text x="1213.5" y="313.5" font-size="13" fill="#ffff00" text-anchor="end" font-weight="normal" >1866.62</text>
<text x="1230.2" y="313.5" font-size="13" fill="#fff" text-anchor="start" font-weight="normal" >[m]</text>
<text x="894.0" y="330.4" font-size="13" fill="#fff" text-anchor="start" font-weight="normal" >Convective Height:</text>
<text x="1123.5" y="330.4" font-size="13" fill="#ff0000" text-anchor="end" font-weight="normal" >10.67</text>
<text x="1213.5" y="330.4" font-size="13" fill="#ff0000" text-anchor="end" font-weight="normal" >10.48</text>
<text x="1230.2" y="330.4" font-size="13" fill="#fff" text-anchor="start" font-weight="normal" >[km]</text>
<text x="894.0" y="375.9" font-size="13" fill="#fff" text-anchor="start" font-weight="normal" >Showalter Index:</text>
<text x="1123.5" y="375.9" font-size="13" fill="#ff0000" text-anchor="end" font-weight="normal" >-6.84</text>
<text x="1230.2" y="375.9" font-size="13" fill="#fff" text-anchor="start" font-weight="normal" >[°C]</text>
<text x="894.0" y="392.8" font-size="13" fill="#fff" text-anchor="start" font-weight="normal" >Modified Thompson Index:</text>
<text x="1123.5" y="392.8" font-size="13" fill="#ff0000" text-anchor="end" font-weight="normal" >53.68</text>
<text x="1230.2" y="392.8" font-size="13" fill="#fff" text-anchor="start" font-weight="normal" >[°C]</text>
<text x="894.0" y="409.6" font-size="13" fill="#fff" text-anchor="start" font-weight="normal" >Total Totals Index:</text>
<text x="1123.5" y="409.6" font-size="13" fill="#ff0000" text-anchor="end" font-weight="normal" >58.86</text>
<text x="1230.2" y="409.6" font-size="13" fill="#fff" text-anchor="start" font-weight="normal" >[°C]</text>
<text x="894.0" y="426.4" font-size="13" fill="#fff" text-anchor="start" font-weight="normal" >KO Index:</text>
<text x="1123.5" y="426.4" font-size="13" fill="#ff0000" text-anchor="end" font-weight="normal" >-24.59</text>
<text x="1230.2" y="426.4" font-size="13" fill="#fff" text-anchor="start" font-weight="normal" >[1]</text>
<text x="894.0" y="443.9" font-size="13" fill="#fff" text-anchor="start" font-weight="normal" >Craven SigSvr / 1000:</text>
<text x="1123.5" y="443.9" font-size="13" fill="#ff0000" text-anchor="end" font-weight="normal" >66.17</text>
<text x="1230.2" y="443.9" font-size="13" fill="#fff" text-anchor="start" font-weight="normal" >[m^3/s^3]</text>
<text x="894.0" y="460.8" font-size="13" fill="#fff" text-anchor="start" font-weight="normal" >SCP RM (new, old):</text>
<text x="1123.5" y="460.8" font-size="13" fill="#ff0000" text-anchor="end" font-weight="normal" >4.65</text>
<text x="1124.0" y="460.8" font-size="13" fill="#fff" text-anchor="start" font-weight="normal" >,</text>
<text x="1136.6" y="460.8" font-size="13" fill="#ff0000" text-anchor="start" font-weight="normal" >7.39</text>
<text x="1230.2" y="460.8" font-size="13" fill="#fff" text-anchor="start" font-weight="normal" >[1]</text>
<text x="894.0" y="477.6" font-size="13" fill="#fff" text-anchor="start" font-weight="normal" >STP (new, old):</text>
<text x="1123.5" y="477.6" font-size="13" fill="#ff0000" text-anchor="end" font-weight="normal" >0.54</text>
<text x="1124.0" y="477.6" font-size="13" fill="#fff" text-anchor="start" font-weight="normal" >,</text>
<text x="1136.6" y="477.6" font-size="13" fill="#ff0000" text-anchor="start" font-weight="normal" >0.54</text>
<text x="1230.2" y="477.6" font-size="13" fill="#fff" text-anchor="start" font-weight="normal" >[1]</text>
<text x="894.0" y="494.5" font-size="13" fill="#fff" text-anchor="start" font-weight="normal" >SB STP (fix) | CWASP:</text>
<text x="1123.5" y="494.5" font-size="13" fill="#ff0000" text-anchor="end" font-weight="normal" >0.52</text>
<text x="1124.0" y="494.5" font-size="13" fill="#fff" text-anchor="start" font-weight="normal" >,</text>
<text x="1136.6" y="494.5" font-size="13" fill="#ffff00" text-anchor="start" font-weight="normal" >58.59</text>
<text x="1230.2" y="494.5" font-size="13" fill="#fff" text-anchor="start" font-weight="normal" >[1], [%]</text>
<text x="894.0" y="511.3" font-size="13" fill="#fff" text-anchor="start" font-weight="normal" >DCP | MMP | MSP:</text>
<text x="1123.5" y="511.3" font-size="13" fill="#ff0000" text-anchor="end" font-weight="normal" >3.77</text>
<text x="1124.0" y="511.3" font-size="13" fill="#fff" text-anchor="start" font-weight="normal" >,</text>
<text x="1136.6" y="511.3" font-size="13" fill="#ff0000" text-anchor="start" font-weight="normal" >98.69<tspan fill="#fff">,</tspan></text>
<text x="1180.7" y="511.3" font-size="13" fill="#ffff00" text-anchor="start" font-weight="normal" >73.72</text>
<text x="1230.2" y="511.3" font-size="13" fill="#fff" text-anchor="start" font-weight="normal" >[1], [%], [%]</text>
<text x="894.0" y="528.8" font-size="13" fill="#fff" text-anchor="start" font-weight="normal" >MB Comp | SHERBE:</text>
<text x="1123.5" y="528.8" font-size="13" fill="#ffff00" text-anchor="end" font-weight="normal" >4.00</text>
<text x="1124.0" y="528.8" font-size="13" fill="#fff" text-anchor="start" font-weight="normal" >,</text>
<text x="1136.6" y="528.8" font-size="13" fill="#ff0000" text-anchor="start" font-weight="normal" >1.84</text>
<text x="1230.2" y="528.8" font-size="13" fill="#fff" text-anchor="start" font-weight="normal" >[1], [1]</text>
<text x="894.0" y="545.6" font-size="13" fill="#fff" text-anchor="start" font-weight="normal" >Exp. Supercell Index CH:</text>
<text x="1123.5" y="545.6" font-size="13" fill="#ff0000" text-anchor="end" font-weight="normal" >7.66</text>
<text x="1230.2" y="545.6" font-size="13" fill="#fff" text-anchor="start" font-weight="normal" >[1]</text>
<text x="894.0" y="562.5" font-size="13" fill="#fff" text-anchor="start" font-weight="normal" >SWISS 12 Index:</text>
<text x="1123.5" y="562.5" font-size="13" fill="#ff0000" text-anchor="end" font-weight="normal" >-17.58</text>
<text x="1230.2" y="562.5" font-size="13" fill="#fff" text-anchor="start" font-weight="normal" >[1]</text>
<text x="894.0" y="579.3" font-size="13" fill="#fff" text-anchor="start" font-weight="normal" >Precipitable Water:</text>
<text x="1123.5" y="579.3" font-size="13" fill="#ff0000" text-anchor="end" font-weight="normal" >40.24</text>
<text x="1230.2" y="579.3" font-size="13" fill="#fff" text-anchor="start" font-weight="normal" >[mm]</text>
<text x="894.0" y="624.9" font-size="13" fill="#fff" text-anchor="start" font-weight="normal" >Storm Direction | Motion:</text>
<text x="1123.5" y="624.9" font-size="13" fill="#ffffff" text-anchor="end" font-weight="normal" >241.22</text>
<text x="1124.0" y="624.9" font-size="13" fill="#fff" text-anchor="start" font-weight="normal" >,</text>
<text x="1136.6" y="624.9" font-size="13" fill="#ff0000" text-anchor="start" font-weight="normal" >24.56</text>
<text x="1230.2" y="624.9" font-size="13" fill="#fff" text-anchor="start" font-weight="normal" >[°], [knt]</text>
<text x="894.0" y="641.7" font-size="13" fill="#fff" text-anchor="start" font-weight="normal" >500m Critical Angle:</text>
<text x="1123.5" y="641.7" font-size="13" fill="#00ff00" text-anchor="end" font-weight="normal" >309.26</text>
<text x="1230.2" y="641.7" font-size="13" fill="#fff" text-anchor="start" font-weight="normal" >[°]</text>
<text x="894.0" y="661.9" font-size="13" fill="#fff" text-anchor="start" font-weight="normal" >SR Wind Sfc-2km:</text>
<text x="1123.5" y="661.9" font-size="13" fill="#ff0000" text-anchor="end" font-weight="normal" >20.37</text>
<text x="1230.2" y="661.9" font-size="13" fill="#fff" text-anchor="start" font-weight="normal" >[knt]</text>
<text x="894.0" y="678.8" font-size="13" fill="#fff" text-anchor="start" font-weight="normal" >SR Wind 4km-6km:</text>
<text x="1123.5" y="678.8" font-size="13" fill="#ff0000" text-anchor="end" font-weight="normal" >27.46</text>
<text x="1230.2" y="678.8" font-size="13" fill="#fff" text-anchor="start" font-weight="normal" >[knt]</text>
<text x="894.0" y="695.6" font-size="13" fill="#fff" text-anchor="start" font-weight="normal" >SR Wind 9km-11km:</text>
<text x="1123.5" y="695.6" font-size="13" fill="#ff0000" text-anchor="end" font-weight="normal" >38.73</text>
<text x="1230.2" y="695.6" font-size="13" fill="#fff" text-anchor="start" font-weight="normal" >[knt] HP</text>
<text x="894.0" y="715.8" font-size="13" fill="#fff" text-anchor="start" font-weight="normal" >Effective Shear 6000:</text>
<text x="1123.5" y="715.8" font-size="13" fill="#ff0000" text-anchor="end" font-weight="normal" >55.13</text>
<text x="1230.2" y="715.8" font-size="13" fill="#fff" text-anchor="start" font-weight="normal" >[knt]</text>
<text x="894.0" y="736.0" font-size="13" fill="#fff" text-anchor="start" font-weight="normal" >Bulk Richardson Number:</text>
<text x="1123.5" y="736.0" font-size="13" fill="#ffff00" text-anchor="end" font-weight="normal" >24.21</text>
<text x="1213.5" y="736.0" font-size="13" fill="#ffff00" text-anchor="end" font-weight="normal" >31.81</text>
<text x="1230.2" y="736.0" font-size="13" fill="#fff" text-anchor="start" font-weight="normal" >[1]</text>
<text x="894.0" y="755.6" font-size="13" fill="#fff" text-anchor="start" font-weight="normal" >3km Effective SRH:</text>
<text x="1123.5" y="755.6" font-size="13" fill="#ff0000" text-anchor="end" font-weight="normal" >118.82</text>
<text x="1230.2" y="755.6" font-size="13" fill="#fff" text-anchor="start" font-weight="normal" >[m^2/s^2]</text>
<text x="894.0" y="772.4" font-size="13" fill="#fff" text-anchor="start" font-weight="normal" >Max 3km SRH (0-2km) | AGL:</text>
<text x="1123.5" y="772.4" font-size="13" fill="#ff0000" text-anchor="end" font-weight="normal" >261.58</text>
<text x="1124.0" y="772.4" font-size="13" fill="#fff" text-anchor="start" font-weight="normal" >,</text>
<text x="1136.6" y="772.4" font-size="13" fill="#00ff00" text-anchor="start" font-weight="normal" >2000.00</text>
<text x="1230.2" y="772.4" font-size="13" fill="#fff" text-anchor="start" font-weight="normal" >[m^2/s^2], [m]</text>
<text x="894.0" y="792.6" font-size="13" fill="#fff" text-anchor="start" font-weight="normal" >3km Energy Helicity Index:</text>
<text x="1123.5" y="792.6" font-size="13" fill="#ff0000" text-anchor="end" font-weight="normal" >1.73</text>
<text x="1213.5" y="792.6" font-size="13" fill="#ff0000" text-anchor="end" font-weight="normal" >2.28</text>
<text x="1230.2" y="792.6" font-size="13" fill="#fff" text-anchor="start" font-weight="normal" >[1]</text>
<text x="894.0" y="809.4" font-size="13" fill="#fff" text-anchor="start" font-weight="normal" >3km Vorticity Gen. Pot.:</text>
<text x="1123.5" y="809.4" font-size="13" fill="#ff0000" text-anchor="end" font-weight="normal" >0.30</text>
<text x="1213.5" y="809.4" font-size="13" fill="#ff0000" text-anchor="end" font-weight="normal" >0.34</text>
<text x="1230.2" y="809.4" font-size="13" fill="#fff" text-anchor="start" font-weight="normal" >[m/s^2]</text>
<text x="894.0" y="40.0" font-size="13" fill="#fff" text-anchor="start" font-weight="normal" text-decoration="underline">Parameter</text>
<text x="1123.5" y="40.0" font-size="13" fill="#fff" text-anchor="end" font-weight="normal" text-decoration="underline">Value LCL</text>
<text x="1213.5" y="40.0" font-size="13" fill="#fff" text-anchor="end" font-weight="normal" text-decoration="underline">Value CCL</text>
<text x="1230.2" y="40.0" font-size="13" fill="#fff" text-anchor="start" font-weight="normal" text-decoration="underline">Unit</text>
<text x="894.0" y="104.4" font-size="13" fill="#fff" text-anchor="start" font-weight="normal" text-decoration="underline">Parcels: Using 50mB mean layer LCL + CCL</text>
<text x="894.0" y="355.7" font-size="13" fill="#fff" text-anchor="start" font-weight="normal" text-decoration="underline">Convective Indices</text>
<text x="894.0" y="604.7" font-size="13" fill="#fff" text-anchor="start" font-weight="normal" text-decoration="underline">Wind Parameters</text>
<text x="753.5" y="835.5" font-size="13" fill="#ff0000" text-anchor="start" font-weight="normal" >Temperature Profile</text>
<text x="753.5" y="855.5" font-size="13" fill="#00ffff" text-anchor="start" font-weight="normal" >Dewpoint Profile</text>
<text x="753.5" y="875.5" font-size="13" fill="#00ff00" text-anchor="start" font-weight="normal" >OBS Windspeed Profile</text>
<text x="753.5" y="895.5" font-size="13" fill="#ff0080" text-anchor="start" font-weight="normal" >SR Windspeed Profile</text>
<text x="753.5" y="915.5" font-size="13" fill="#c0c000" text-anchor="start" font-weight="normal" >Sfc-3km Storm Relative Helicity Profile</text>
<text x="753.5" y="935.5" font-size="13" fill="#404000" text-anchor="start" font-weight="normal" >Effective Layer (CAPE &gt;= 100 J/kg)</text>
<text x="1103.0" y="835.5" font-size="13" fill="#00ff00" text-anchor="start" font-weight="normal" >No / Non Severe Thunderstorms</text>
<text x="1103.0" y="855.5" font-size="13" fill="#ffff00" text-anchor="start" font-weight="normal" >Scattered / Moderate Thunderstorms</text>
<text x="1103.0" y="875.5" font-size="13" fill="#ff0000" text-anchor="start" font-weight="normal" >Widespread / Severe Thunderstorms</text>
</svg>
</body></html>
